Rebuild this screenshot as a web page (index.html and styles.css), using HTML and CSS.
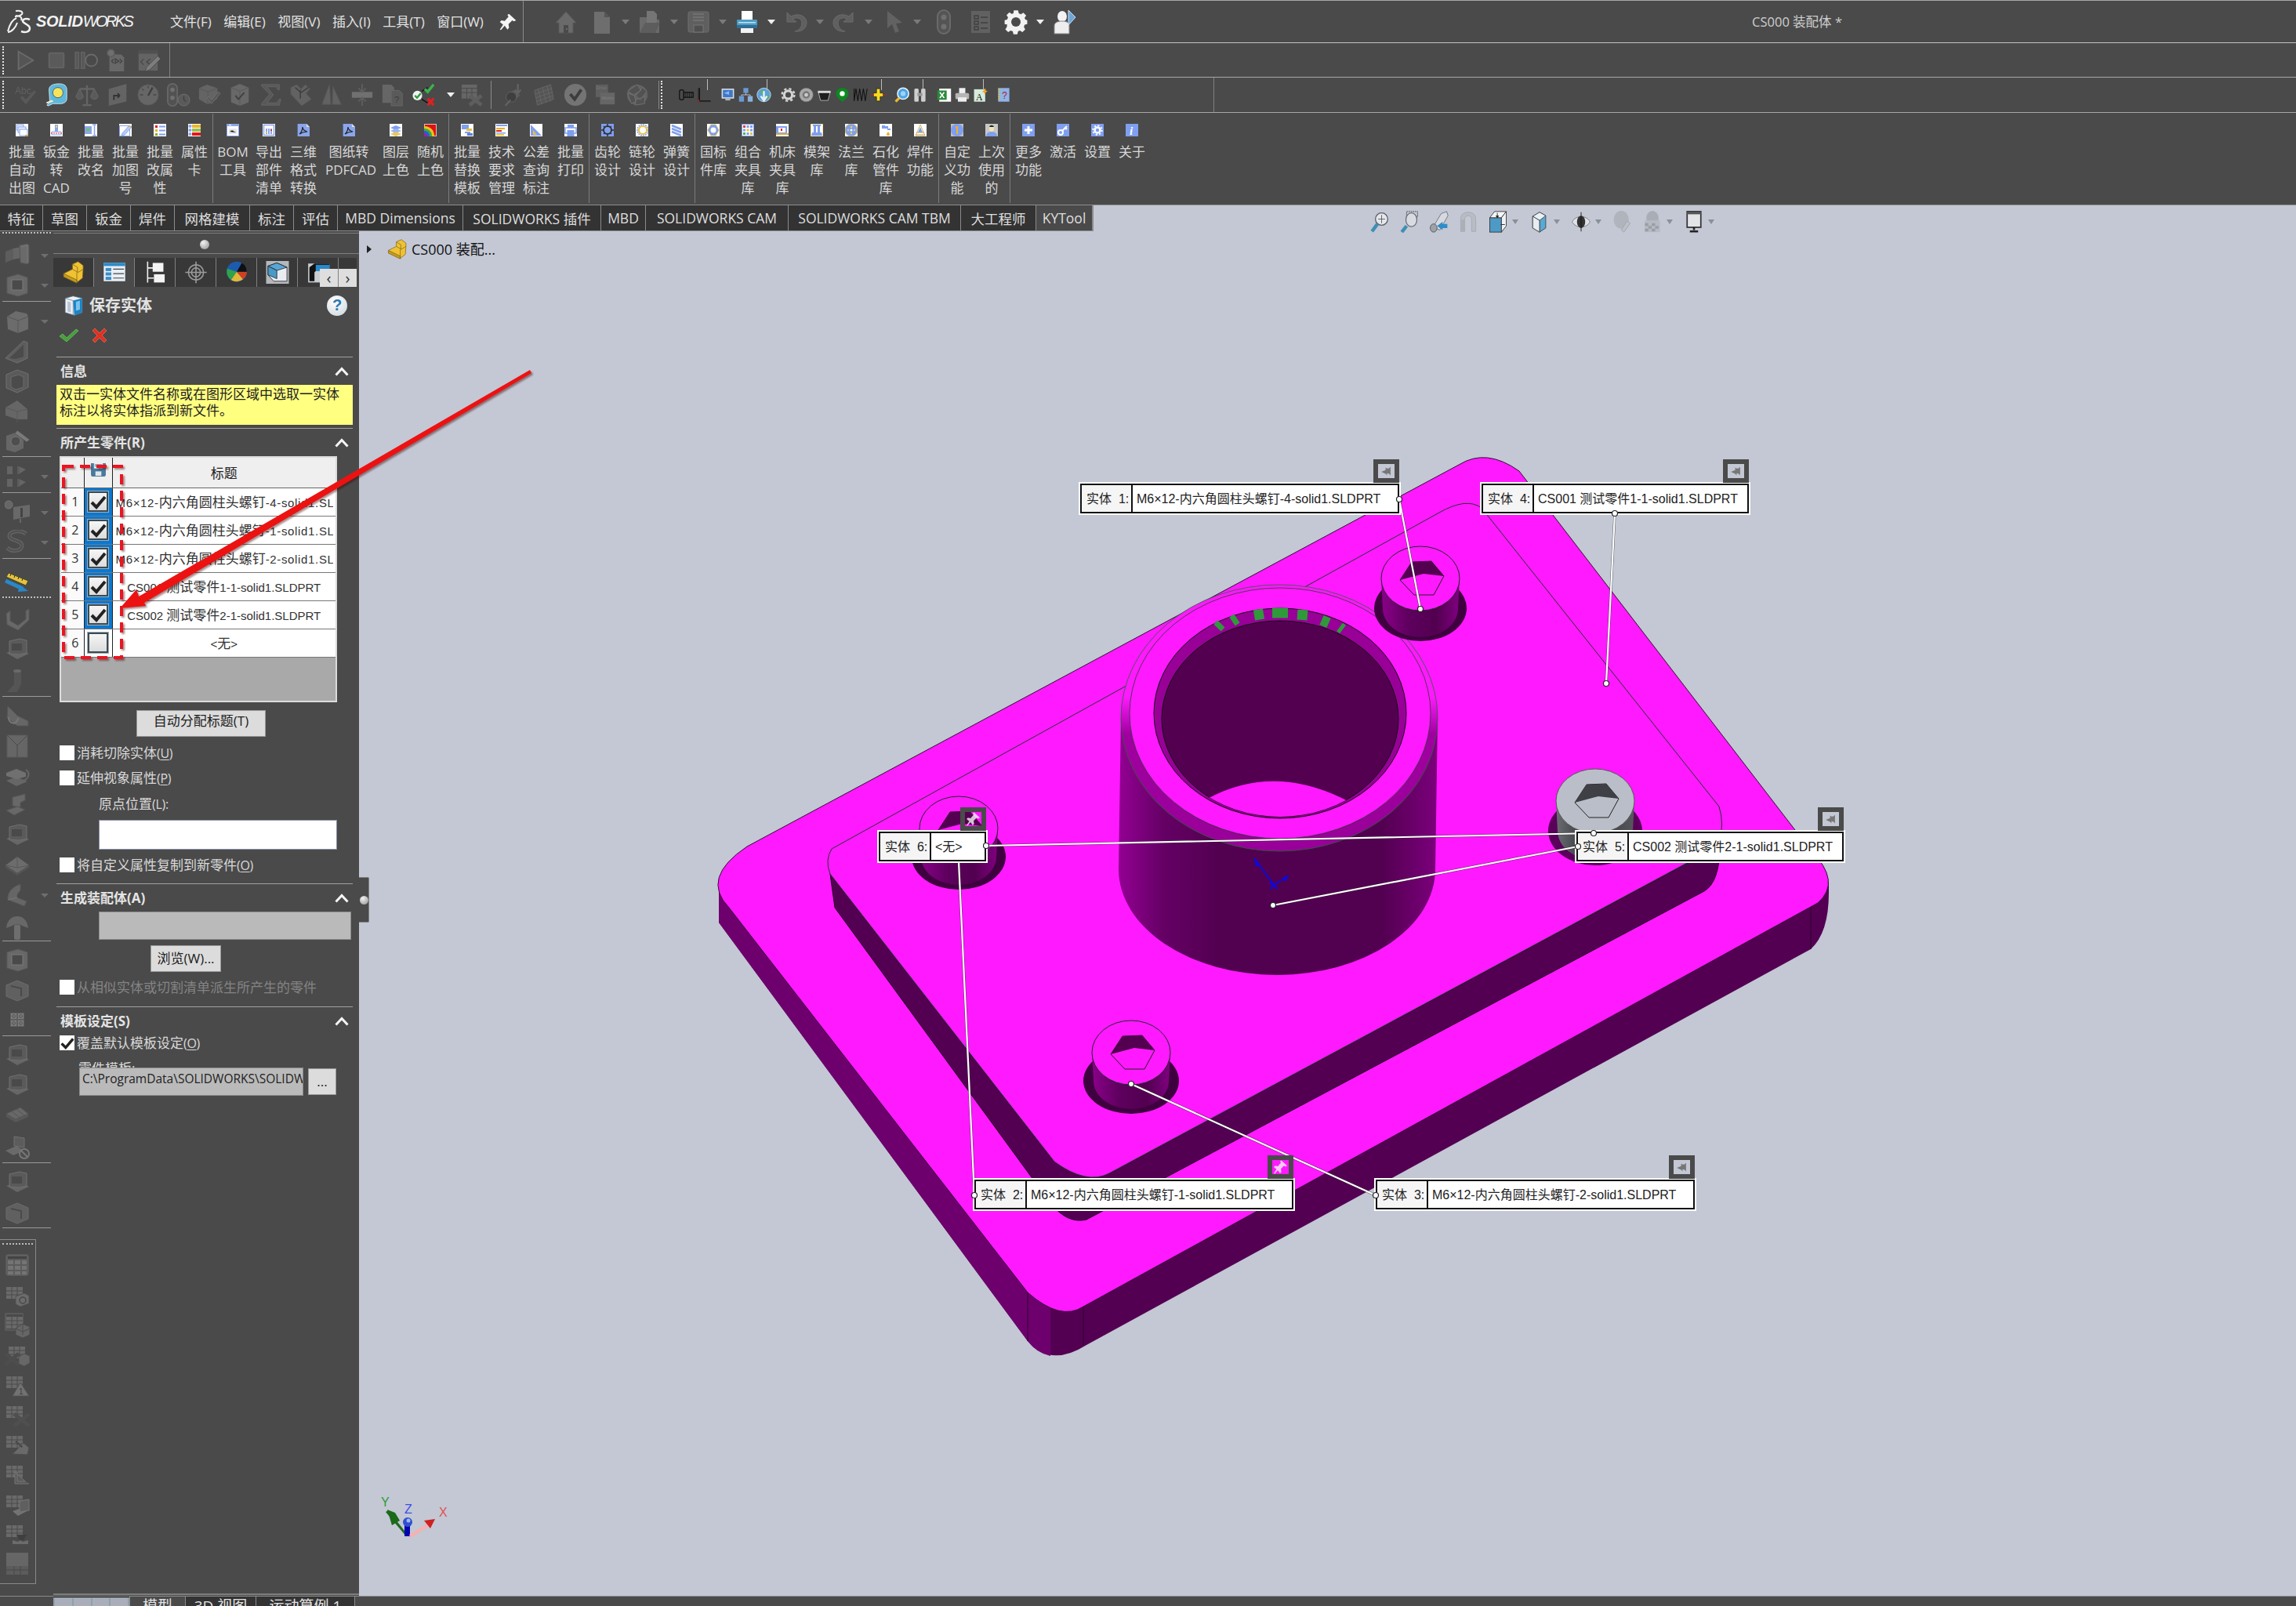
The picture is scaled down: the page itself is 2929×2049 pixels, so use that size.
FILE: index.html
```html
<!DOCTYPE html>
<html lang="zh-CN">
<head>
<meta charset="utf-8">
<title>CS000 装配体</title>
<link rel="stylesheet" href="styles.css">
</head>
<body>
<svg class="sprite" aria-hidden="true">
<defs>
<linearGradient id="bodyGrad" x1="0" x2="1" y1="0" y2="0"><stop offset="0" stop-color="#930093"/><stop offset=".14" stop-color="#650065"/><stop offset=".32" stop-color="#520050"/><stop offset=".82" stop-color="#520050"/><stop offset="1" stop-color="#7c007c"/></linearGradient>
<linearGradient id="screwGrad" x1="0" x2="1" y1="0" y2="0"><stop offset="0" stop-color="#8a008a"/><stop offset=".35" stop-color="#5e005e"/><stop offset=".7" stop-color="#520050"/><stop offset="1" stop-color="#800080"/></linearGradient>
<linearGradient id="greyScrew" x1="0" x2="1" y1="0" y2="0"><stop offset="0" stop-color="#6a6d72"/><stop offset=".4" stop-color="#303236"/><stop offset="1" stop-color="#55575c"/></linearGradient>
<linearGradient id="chamfer" x1="0" x2="0" y1="0" y2="1"><stop offset=".42" stop-color="#ff19ff"/><stop offset=".56" stop-color="#a000a0"/><stop offset="1" stop-color="#990099"/></linearGradient>
<clipPath id="holeClip"><ellipse cx="1633" cy="917" rx="151" ry="125"/></clipPath>
</defs>

<!-- title bar -->
<symbol id="q-home" viewBox="0 0 32 32"><path d="M16 3 3 17h4v13h18V17h4z" fill="#6a6a6a" stroke="#585858"/><rect x="13" y="20" width="6" height="10" fill="#4a4a4a"/><circle cx="17" cy="25" r="1" fill="#777"/></symbol>
<symbol id="q-doc" viewBox="0 0 32 32"><path d="M7 3h13l7 7v21H7z" fill="#6e6e6e"/><path d="M20 3v7h7z" fill="#555"/></symbol>
<symbol id="q-open" viewBox="0 0 32 32"><path d="M3 10h9l2 3h14v17H3z" fill="#6a6a6a"/><path d="M12 2h9l4 4v10l-9 8-4-7z" fill="#757575"/><path d="M10 17 3 30h20l6-13z" fill="#5d5d5d"/></symbol>
<symbol id="q-save" viewBox="0 0 32 32"><rect x="3" y="3" width="26" height="26" rx="2" fill="#5f5f5f" stroke="#6e6e6e"/><path d="M9 6h14M9 10h14M9 14h14" stroke="#777" stroke-width="1.5"/><rect x="10" y="20" width="12" height="9" fill="#4f4f4f" stroke="#777"/></symbol>
<symbol id="q-print" viewBox="0 0 32 32"><rect x="9" y="2" width="14" height="12" fill="#fff"/><rect x="3" y="13" width="26" height="11" rx="1" fill="#4d9cc4"/><rect x="3" y="20" width="26" height="4" fill="#2f6f96"/><rect x="8" y="24" width="16" height="6" fill="#f2f2f2"/><rect x="5" y="16" width="22" height="1.5" fill="#bfe2f2"/></symbol>
<symbol id="q-undo" viewBox="0 0 32 32"><path d="M5 4v12h12l-5-4c6-3 12 0 12 5 0 6-4 10-9 11 9 1 15-4 15-11 0-9-11-13-20-8z" fill="#5f5f5f" stroke="#6c6c6c"/></symbol>
<symbol id="q-redo" viewBox="0 0 32 32"><path d="M27 4v12H15l5-4c-6-3-12 0-12 5 0 6 4 10 9 11-9 1-15-4-15-11 0-9 11-13 20-8z" fill="#5f5f5f" stroke="#6c6c6c"/></symbol>
<symbol id="q-cursor" viewBox="0 0 32 32"><path d="M9 2v22l6-5 4 11 5-2-4-10 8-1z" fill="#626262"/></symbol>
<symbol id="q-light" viewBox="0 0 32 32"><rect x="8" y="1" width="16" height="30" rx="8" fill="#545454" stroke="#6a6a6a" stroke-width="2"/><circle cx="16" cy="10" r="3.5" fill="#6f6f6f"/><circle cx="16" cy="22" r="3.5" fill="#6f6f6f"/></symbol>
<symbol id="q-list" viewBox="0 0 32 32"><rect x="4" y="2" width="24" height="28" fill="#616161"/><path d="M8 8h5v4H8zM8 15h5v4H8zM8 22h5v4H8z" fill="none" stroke="#3f3f3f" stroke-width="1.4"/><path d="M16 10h9M16 17h9M16 24h9" stroke="#3f3f3f" stroke-width="1.6"/></symbol>
<symbol id="q-gear" viewBox="0 0 32 32"><path d="M13 1h6l1 4 3 1.400 3.500-2.300 4 4-2.300 3.600L29.500 14l2.500.7v5.600l-3.500 1-1.300 3 2 3.500-4 4-3.600-2.200-2.600 1.100-1 4h-5.500l-1-4-3-1.200-3.500 2.300-4-4 2.200-3.500L3.500 21 0 20.200v-5.500L3.500 14l1.300-3L2.700 7.600l4-4L10 5.800 12.500 5z" transform="scale(.9) translate(1.800 .5)" fill="#f2f2f2"/><circle cx="16" cy="16" r="6" fill="#4a4a4a"/></symbol>
<symbol id="q-user" viewBox="0 0 32 32"><ellipse cx="13" cy="9" rx="6" ry="7" fill="#f3f3f3"/><path d="M3 31V21c0-4 4-6 10-6s9 2 9 6v10z" fill="#eee" stroke="#888"/><path d="M21 1l9 9-9 10z" fill="#6fa6d8" stroke="#cfe4f5"/></symbol>
<symbol id="q-pin" viewBox="0 0 32 32"><path d="M18 1l13 12-4 2-3-2-7 7 1 7-3 3-5-7-7 8-2-1 6-9-6-5 3-3 6 1 7-8-2-3z" fill="#f5f5f5"/></symbol>
<symbol id="c-pin" viewBox="0 0 20 20"><path d="M16 4v12l-2-2-3-1v3L9 14 3 11l6-2.500V5l2 1.500L14 6z" fill="#777"/></symbol>

<!-- macro row -->
<symbol id="m-play" viewBox="0 0 32 32"><path d="M7 4l20 12L7 28z" fill="#555" stroke="#6a6a6a" stroke-width="2"/></symbol>
<symbol id="m-stop" viewBox="0 0 32 32"><rect x="6" y="6" width="20" height="20" rx="2" fill="#5a5a5a" stroke="#646464" stroke-width="2"/></symbol>
<symbol id="m-pause" viewBox="0 0 32 32"><rect x="1" y="5" width="5" height="22" fill="#585858" stroke="#6a6a6a"/><rect x="9" y="5" width="5" height="22" fill="#585858" stroke="#6a6a6a"/><circle cx="23" cy="16" r="8" fill="none" stroke="#6a6a6a" stroke-width="2"/></symbol>
<symbol id="m-run" viewBox="0 0 32 32"><path d="M7 8h16l4 4v19H7z" fill="#686868"/><circle cx="9" cy="6" r="5" fill="#6f6f6f" stroke="#585858" stroke-dasharray="2 1" stroke-width="2"/><path d="M13 14l-3 3 3 3M21 14l3 3-3 3M15 14l5 3-5 3z" stroke="#444" fill="none" stroke-width="1.500"/></symbol>
<symbol id="m-edit" viewBox="0 0 32 32"><rect x="3" y="2" width="26" height="28" fill="#646464"/><rect x="3" y="2" width="26" height="5" fill="#505050"/><path d="M10 14l-4 4 4 4M19 14l-5 4 5 4" stroke="#484848" fill="none" stroke-width="1.500"/><path d="M29 10l4 4-15 15-6 2 2-6z" fill="#7d7d7d" stroke="#4d4d4d"/></symbol>

<!-- grey tool row -->
<symbol id="t-tape" viewBox="0 0 32 32"><path d="M3 30l4-4-1-17C6 3 12 1 20 1s10 4 10 8v12c0 5-4 7-9 7H11l-6 3z" fill="#5fb7d9" stroke="#cde9f5"/><circle cx="18" cy="13" r="7" fill="#f6e35a" stroke="#375f7a"/><path d="M3 28l9-3-2-2-8 3z" fill="#f3ead0"/></symbol>
<symbol id="t-scale" viewBox="0 0 32 32"><path d="M16 3v26M6 8h20M10 30h12" stroke="#646464" stroke-width="2.500"/><path d="M1 18l5-10 5 10a5 4 0 01-10 0zM21 18l5-10 5 10a5 4 0 01-10 0z" fill="#5a5a5a" stroke="#6a6a6a"/></symbol>
<symbol id="t-face" viewBox="0 0 32 32"><path d="M4 8l24-7v24L4 31z" fill="#646464"/><path d="M11 23v-6h8M19 17l-3-3M19 17l-3 3" stroke="#333" fill="none" stroke-width="2"/></symbol>
<symbol id="t-gauge" viewBox="0 0 32 32"><circle cx="16" cy="16" r="14" fill="#666" stroke="#5a5a5a"/><path d="M16 17l6-11" stroke="#3f3f3f" stroke-width="2.500"/><path d="M5 16h4M8 8l2 2M16 4v3M27 16h-4" stroke="#484848" stroke-width="1.500"/></symbol>
<symbol id="t-stat" viewBox="0 0 32 32"><rect x="1" y="1" width="13" height="30" rx="6" fill="#525252" stroke="#666" stroke-width="2"/><circle cx="7.500" cy="9" r="3" fill="#707070"/><circle cx="7.500" cy="20" r="3" fill="#707070"/><circle cx="23" cy="23" r="8" fill="#5a5a5a" stroke="#707070"/><path d="M23 18v5l3 2" stroke="#333" fill="none"/></symbol>
<symbol id="t-boxc" viewBox="0 0 32 32"><path d="M2 7l11-5 14 5v14L14 29 2 22z" fill="#646464"/><path d="M14 12v17M2 7l12 5 13-5" stroke="#565656" fill="none"/><path d="M13 20l6 8 12-14-3-2-9 11-4-5z" fill="#585858" stroke="#707070"/></symbol>
<symbol id="t-box2" viewBox="0 0 32 32"><path d="M4 6l12-5 12 5v20l-12 5-12-5z" fill="#686868"/><path d="M16 11v20M4 6l12 5 12-5" stroke="#585858" fill="none"/><path d="M10 17l4 5 8-9" stroke="#3f3f3f" fill="none" stroke-width="2"/></symbol>
<symbol id="t-sum" viewBox="0 0 32 32"><path d="M4 2h24v7h-2l-2-4H11l9 11-9 11h14l3-5h2l-2 8H4v-2l11-13L4 4z" fill="#585858" stroke="#686868"/></symbol>
<symbol id="t-sect" viewBox="0 0 32 32"><path d="M2 6l8-4 6 6 6-6 6 6-5 6 7 8-13 9-15-16z" fill="#626262" stroke="#555"/><path d="M15 9v12M8 6l8 7 10-7" stroke="#3e3e3e" fill="none" stroke-width="1.500"/></symbol>
<symbol id="t-fold" viewBox="0 0 32 32"><path d="M3 29L13 2l2 27zM17 29l1-24 11 24z" fill="#626262" stroke="#575757"/></symbol>
<symbol id="t-inter" viewBox="0 0 32 32"><rect x="2" y="12" width="28" height="8" fill="#707070"/><path d="M16 1v10M11 7l5 5 5-5M16 31V21M11 25l5-5 5 5" stroke="#5e5e5e" fill="none" stroke-width="2"/></symbol>
<symbol id="t-check" viewBox="0 0 32 32"><circle cx="8" cy="17" r="6.500" fill="#f2f2f2"/><path d="M4.500 17l3 3 5-6" fill="none" stroke="#2b9e3f" stroke-width="2.500"/><path d="M14 11L22 6M14 22l8 5" stroke="#111" stroke-width="1.500"/><path d="M18 8l4 4 8-10" fill="none" stroke="#3bb24b" stroke-width="3.500"/><path d="M22 21l8 9M30 21l-8 9" stroke="#e02020" stroke-width="3.500"/></symbol>
<symbol id="t-tablex" viewBox="0 0 32 32"><rect x="2" y="2" width="21" height="19" fill="#666"/><path d="M2 7h21M2 13h21M9 7v14M16 7v14" stroke="#4a4a4a"/><path d="M13 17l16 13M29 17L13 30" stroke="#5e5e5e" stroke-width="5"/></symbol>
<symbol id="t-hole" viewBox="0 0 32 32"><path d="M8 14l10-5 7 8-9 7z" fill="#5c5c5c"/><circle cx="13" cy="19" r="7" fill="#3f3f3f" stroke="#626262"/><path d="M22 1v12M18 9l4 5 4-5M5 31l7-8" stroke="#626262" stroke-width="2.500" fill="none"/></symbol>
<symbol id="t-mesh" viewBox="0 0 32 32"><path d="M3 10l22-8 4 20-22 8z" fill="#555" stroke="#666"/><path d="M8 8l5 21M14 6l5 21M20 4l5 21M4 15l23-8M5 20l23-8M6 25l23-8" stroke="#666"/></symbol>
<symbol id="t-okc" viewBox="0 0 32 32"><circle cx="16" cy="16" r="15" fill="#747474"/><path d="M9 15l6 7 9-13" fill="none" stroke="#3d3d3d" stroke-width="4"/></symbol>
<symbol id="t-swirl" viewBox="0 0 32 32"><circle cx="16" cy="16" r="14" fill="#626262"/><path d="M3 11L16 2l5 8-10 6zM29 11l-9 12-6-6 9-11zM8 28l-5-14 9 3 2 8zM26 28l-13 2 1-7 12-5z" fill="#525252" stroke="#707070"/></symbol>
<!-- small coloured row -->
<symbol id="n-bolt" viewBox="0 0 24 24"><rect x="1" y="4" width="7" height="16" rx="3" fill="none" stroke="#111" stroke-width="1.600"/><rect x="8" y="8" width="15" height="8" fill="none" stroke="#111" stroke-width="1.600"/><path d="M11 8v8M14 8v8M17 8v8M20 8v8" stroke="#111"/></symbol>
<symbol id="n-angle" viewBox="0 0 24 24"><path d="M4 1v21h18" fill="none" stroke="#111" stroke-width="2"/><path d="M2 1v22h20" fill="none" stroke="#333"/><rect x="2" y="20" width="2" height="3" fill="#d02020"/></symbol>
<symbol id="n-mon" viewBox="0 0 24 24"><rect x="2" y="2" width="20" height="16" fill="#d8dde4"/><rect x="4" y="4" width="16" height="12" fill="#3f78c8"/><path d="M8 18h8v3H8z" fill="#aeb3ba"/><path d="M6 9l8-3v6z" fill="#8fb8ee"/></symbol>
<symbol id="n-net" viewBox="0 0 24 24"><rect x="8" y="1" width="8" height="8" fill="#6a9ad4"/><rect x="1" y="14" width="8" height="9" fill="#6a9ad4"/><rect x="15" y="14" width="8" height="9" fill="#8ab0de"/><path d="M12 9v3M5 14v-2h14v2" stroke="#dde" fill="none"/></symbol>
<symbol id="n-globe" viewBox="0 0 24 24"><circle cx="12" cy="12" r="11" fill="#5ca0d8" stroke="#d0e4f2"/><path d="M5 7l6-3 3 3-4 4zM14 14l6-2 1 5-6 3z" fill="#60b060"/><path d="M12 6v12M7 14l5 7 5-7" stroke="#e8f2ff" stroke-width="3" fill="none"/></symbol>
<symbol id="n-gear" viewBox="0 0 24 24"><circle cx="12" cy="12" r="6.500" fill="none" stroke="#d4d4d4" stroke-width="4"/><circle cx="12" cy="12" r="10" fill="none" stroke="#d4d4d4" stroke-width="3" stroke-dasharray="4 4"/></symbol>
<symbol id="n-gear2" viewBox="0 0 24 24"><circle cx="12" cy="12" r="11" fill="#a8a8a8" stroke="#777" stroke-dasharray="3 2"/><circle cx="12" cy="12" r="6" fill="#777"/><circle cx="12" cy="12" r="3" fill="#ccc"/></symbol>
<symbol id="n-belt" viewBox="0 0 24 24"><path d="M2 6h20l-4 15H6z" fill="#1f1f1f" stroke="#ccc"/><path d="M2 6h20v3H2z" fill="#e8e8e8"/></symbol>
<symbol id="n-pin" viewBox="0 0 24 24"><path d="M12 1c6 0 10 4 10 9s-6 10-10 13C8 20 2 15 2 10s4-9 10-9z" fill="#0b8a1f"/><circle cx="12" cy="10" r="4" fill="#fff"/></symbol>
<symbol id="n-spring" viewBox="0 0 24 24"><path d="M2 2v20l3-20 3 20 3-20 3 20 3-20 3 20 3-20" fill="none" stroke="#111" stroke-width="1.300"/></symbol>
<symbol id="n-cross" viewBox="0 0 24 24"><path d="M9 2h6v7h5v6h-5v7H9v-7H4V9h5z" fill="#f5dc20" stroke="#222"/><path d="M1 12h4M19 12h4" stroke="#d02020" stroke-width="2"/></symbol>
<symbol id="n-zoom" viewBox="0 0 24 24"><circle cx="14" cy="10" r="9" fill="#4aa5e8" stroke="#eaf4fb" stroke-width="2"/><circle cx="14" cy="10" r="4" fill="#9fd2f5"/><path d="M8 17l-6 6" stroke="#f0b830" stroke-width="4"/></symbol>
<symbol id="n-bino" viewBox="0 0 24 24"><rect x="3" y="2" width="7" height="21" rx="2" fill="#cfcfcf"/><rect x="14" y="2" width="7" height="21" rx="2" fill="#cfcfcf"/><rect x="8" y="9" width="8" height="5" fill="#999"/></symbol>
<symbol id="n-xl" viewBox="0 0 24 24"><rect x="4" y="2" width="19" height="21" fill="#fff"/><rect x="1" y="5" width="15" height="15" fill="#2a8a3a"/><path d="M5 8l7 9M12 8l-7 9" stroke="#fff" stroke-width="2"/></symbol>
<symbol id="n-print" viewBox="0 0 24 24"><rect x="7" y="1" width="10" height="9" fill="#f0f0f0"/><rect x="1" y="9" width="22" height="10" rx="2" fill="#b5b5b5"/><rect x="5" y="16" width="14" height="7" fill="#eee"/></symbol>

<!-- command manager -->
<symbol id="c1" viewBox="0 0 16 16"><rect width="16" height="16" fill="#fff"/><rect x="1" y="1" width="9" height="7" fill="#dfe7fa" stroke="#8aa5ea"/><rect x="3" y="4" width="10" height="7" fill="#eef2fc" stroke="#8aa5ea"/><rect x="5" y="7" width="10" height="8" fill="#fff" stroke="#8aa5ea"/><rect x="12" y="14" width="4" height="2" fill="#c8a860"/></symbol>
<symbol id="c2" viewBox="0 0 16 16"><rect width="16" height="16" fill="#fff"/><rect x="6" y="1" width="4" height="9" fill="#8aa5ea"/><rect x="7" y="2" width="2" height="3" fill="#e5cf70"/><path d="M2 10h12v4H2z" fill="none" stroke="#8aa5ea"/><path d="M1 12h14" stroke="#e03a3a" stroke-dasharray="2 1"/></symbol>
<symbol id="c3" viewBox="0 0 16 16"><rect width="16" height="16" fill="#fff"/><rect y="3" width="9" height="10" fill="#8aa5ea"/><rect x="2" y="6" width="5" height="3" fill="#6ec06e"/><path d="M10 1h5M10 15h5M12.500 1v14" stroke="#8aa5ea" stroke-width="1.500"/></symbol>
<symbol id="c4" viewBox="0 0 16 16"><rect width="16" height="16" fill="#fff"/><rect x=".5" y="2.500" width="13" height="13" fill="none" stroke="#8aa5ea"/><path d="M4 12L13 2l3 2-9 10-4 1z" fill="#b8cdf5" stroke="#8aa5ea"/><path d="M13 2l3 2-1 1-3-2z" fill="#e5b040"/></symbol>
<symbol id="c5" viewBox="0 0 16 16"><rect width="16" height="16" fill="#fff"/><rect x="2" y="2" width="3" height="3" fill="#e01818"/><rect x="2" y="7" width="3" height="3" fill="#f0b020"/><rect x="2" y="12" width="3" height="3" fill="#80b030"/><path d="M7 3.500h8M7 8.500h8M7 13.500h8" stroke="#7f9ff0" stroke-width="2"/></symbol>
<symbol id="c6" viewBox="0 0 16 16"><rect width="16" height="16" fill="#fff"/><circle cx="2.500" cy="3" r="2" fill="#8aa5ea"/><circle cx="2.500" cy="8" r="2" fill="#8aa5ea"/><circle cx="2.500" cy="13" r="2" fill="#8aa5ea"/><rect x="5" y="1" width="11" height="4" fill="#e8b830"/><rect x="5" y="6" width="11" height="4" fill="#9cc050"/><rect x="5" y="11" width="11" height="4" fill="#e01818"/></symbol>
<symbol id="c7" viewBox="0 0 16 16"><rect width="16" height="16" fill="#8aa5ea"/><rect x="1" y="3" width="14" height="12" fill="#fff"/><rect x="3" y="6" width="10" height="7" fill="#dfe7fa"/><path d="M4 10l3-2 5 3" stroke="#c8a860"/><rect x="3" y="1" width="3" height="1" fill="#fff"/></symbol>
<symbol id="c8" viewBox="0 0 16 16"><rect width="16" height="16" fill="#fff"/><rect x="1.500" y="1.500" width="13" height="13" fill="none" stroke="#8aa5ea" stroke-width="1.500"/><path d="M5 6v7M8 6v7M11 6v7" stroke="#8aa5ea" stroke-width="2"/><path d="M11 7v2" stroke="#e03030" stroke-width="2"/><path d="M5 10v2" stroke="#e8c040" stroke-width="2"/></symbol>
<symbol id="c9" viewBox="0 0 16 16"><path d="M0 0h12l4 4v12H0z" fill="#8aa5ea"/><path d="M12 0v4h4z" fill="#ddd"/><path d="M3 13c3-2 4-7 4-9 0 3 2 5 6 6-4 0-7 1-10 3z" fill="none" stroke="#222" stroke-width="1.200"/><path d="M0 0v16" stroke="#333"/></symbol>
<symbol id="c10" viewBox="0 0 16 16"><rect width="16" height="16" fill="#fff"/><path d="M8 2l7 3-7 3-7-3z" fill="#7f9ff0"/><path d="M8 6l7 3-7 3-7-3z" fill="#9ab4f2"/><path d="M8 10l7 3-7 3-7-3z" fill="#e8c860"/></symbol>
<symbol id="c11" viewBox="0 0 16 16"><rect width="16" height="16" fill="#c8c8c8"/><rect x="1" y="1" width="14" height="14" fill="#e01010"/><circle cx="1" cy="15" r="12" fill="#f0c020"/><circle cx="1" cy="15" r="9" fill="#40a840"/><circle cx="1" cy="15" r="6" fill="#2060e0"/><circle cx="1" cy="15" r="3" fill="#a020a0"/></symbol>
<symbol id="c12" viewBox="0 0 16 16"><rect width="16" height="16" fill="#fff"/><rect x="1" y="1" width="9" height="6" fill="#7f9ff0"/><rect x="7" y="6" width="7" height="3" fill="#e8c040"/><rect x="5" y="10" width="7" height="2" fill="#7f9ff0"/><rect x="8" y="12" width="7" height="3" fill="#5f7fd8"/></symbol>
<symbol id="c13" viewBox="0 0 16 16"><rect width="16" height="16" fill="#fff"/><rect x="1" y="1" width="14" height="2" fill="#7f9ff0"/><rect x="1" y="5" width="11" height="2" fill="#f0b020"/><rect x="1" y="8" width="7" height="2" fill="#e02020"/><rect x="1" y="11" width="12" height="1.500" fill="#7f9ff0"/><rect x="1" y="13" width="10" height="2" fill="#f0c840"/></symbol>
<symbol id="c14" viewBox="0 0 16 16"><rect width="16" height="16" fill="#fff"/><path d="M1 1l14 14H1z" fill="#7f9ff0"/><path d="M4 8l5 6H4z" fill="#f0c030"/></symbol>
<symbol id="c15" viewBox="0 0 16 16"><rect width="16" height="16" fill="#fff"/><rect x="4" y="1" width="8" height="4" fill="#7f9ff0"/><rect x="1" y="5" width="14" height="7" fill="none" stroke="#7f9ff0" stroke-width="1.500"/><rect x="3.500" y="8" width="9" height="8" fill="#7f9ff0"/></symbol>
<symbol id="c16" viewBox="0 0 16 16"><rect width="16" height="16" fill="#7f9ff0"/><circle cx="8" cy="8" r="5" fill="none" stroke="#333" stroke-width="2"/><path d="M3 3l2 2M13 3l-2 2M3 13l2-2M13 13l-2-2M8 0v3M8 13v3M0 8h3M13 8h3" stroke="#333" stroke-width="1.500"/></symbol>
<symbol id="c17" viewBox="0 0 16 16"><rect width="16" height="16" fill="#fff"/><circle cx="9" cy="8" r="5" fill="none" stroke="#e8c040" stroke-width="2"/><circle cx="9" cy="8" r="7" fill="none" stroke="#7f9ff0" stroke-width="1.500" stroke-dasharray="2 1"/></symbol>
<symbol id="c18" viewBox="0 0 16 16"><rect width="16" height="16" fill="#fff"/><path d="M2 2l12 5M2 6l12 5M2 10l12 5" stroke="#7f9ff0" stroke-width="2.500"/></symbol>
<symbol id="c19" viewBox="0 0 16 16"><rect width="16" height="16" fill="#fff"/><path d="M5 1h6l4 7-4 7H5L1 8z" fill="#7f9ff0" stroke="#d8b860"/><circle cx="8" cy="8" r="3.500" fill="#fff"/></symbol>
<symbol id="c20" viewBox="0 0 16 16"><rect width="16" height="16" fill="#7f9ff0"/><rect x="1" y="1" width="14" height="14" fill="#fff"/><rect x="2" y="2" width="3" height="3" fill="#e04040"/><rect x="6.500" y="2" width="3" height="3" fill="#7f9ff0"/><rect x="11" y="2" width="3" height="3" fill="#7f9ff0"/><rect x="2" y="6.500" width="3" height="3" fill="#7f9ff0"/><rect x="6.500" y="6.500" width="3" height="3" fill="#e8c040"/><rect x="11" y="6.500" width="3" height="3" fill="#7f9ff0"/><rect x="2" y="11" width="3" height="3" fill="#50b050"/><rect x="6.500" y="11" width="3" height="3" fill="#7f9ff0"/><rect x="11" y="11" width="3" height="3" fill="#e8c040"/></symbol>
<symbol id="c21" viewBox="0 0 16 16"><rect width="16" height="16" fill="#fff"/><rect y="3" width="14" height="10" fill="#7f9ff0"/><rect x="3" y="5" width="9" height="6" fill="#fff"/><rect x="6" y="6" width="2" height="3" fill="#e02020"/><rect x="0" y="12" width="16" height="2" fill="#d8b040"/></symbol>
<symbol id="c22" viewBox="0 0 16 16"><rect width="16" height="16" fill="#fff" stroke="#e8d060"/><rect x="3" y="1" width="10" height="2" fill="#7f9ff0"/><rect x="4" y="3" width="3" height="8" fill="#7f9ff0"/><rect x="9" y="3" width="3" height="8" fill="#7f9ff0"/><path d="M2 11h12l1 4H1z" fill="#7f9ff0"/></symbol>
<symbol id="c23" viewBox="0 0 16 16"><rect width="16" height="16" fill="#fff"/><circle cx="8" cy="8" r="8" fill="#7f9ff0"/><circle cx="8" cy="8" r="8" fill="none" stroke="#d8c060"/><g fill="#e8d060"><circle cx="8" cy="4" r="1.200"/><circle cx="8" cy="12" r="1.200"/><circle cx="4" cy="8" r="1.200"/><circle cx="12" cy="8" r="1.200"/></g><circle cx="8" cy="8" r="1.500" fill="#fff"/></symbol>
<symbol id="c24" viewBox="0 0 16 16"><rect width="16" height="16" fill="#fff"/><path d="M3 3h8v3h3v2h-4V6H3z" fill="#7f9ff0"/><rect x="3" y="2" width="4" height="1" fill="#7f9ff0"/><path d="M11 10l2 3a2 2 0 1 1-4 0z" fill="#f0a820"/></symbol>
<symbol id="c25" viewBox="0 0 16 16"><rect width="16" height="16" fill="#fff"/><path d="M8 1l6 14H2z" fill="none" stroke="#d8b860"/><path d="M8 4l3 7H5z" fill="#7f9ff0"/><path d="M3 11h10M2 14h12" stroke="#c0a060"/></symbol>
<symbol id="c26" viewBox="0 0 16 16"><rect width="16" height="16" fill="#c0c0c0"/><circle cx="8" cy="8" r="8" fill="#7f9ff0"/><rect x="7" y="3" width="2" height="10" fill="#f0b030"/><path d="M5.500 5L7 3v2z" fill="#f0b030"/></symbol>
<symbol id="c27" viewBox="0 0 16 16"><rect width="16" height="16" fill="#c8c8c8"/><path d="M1 16c0-4 3-6 7-6s7 2 7 6z" fill="#7f9ff0"/><ellipse cx="8" cy="6" rx="3" ry="4" fill="#f5e6b0"/><path d="M5 4c1-3 5-3 6 0z" fill="#222"/></symbol>
<symbol id="c28" viewBox="0 0 16 16"><rect width="16" height="16" fill="#7f9ff0"/><path d="M3 8h10M8 3v10" stroke="#fff" stroke-width="3"/></symbol>
<symbol id="c29" viewBox="0 0 16 16"><rect width="16" height="16" fill="#7f9ff0"/><circle cx="5" cy="11" r="3" fill="none" stroke="#fff" stroke-width="2"/><path d="M7 9l6-6M11 5l2 2" stroke="#fff" stroke-width="2"/></symbol>
<symbol id="c30" viewBox="0 0 16 16"><rect width="16" height="16" fill="#7f9ff0"/><circle cx="8" cy="8" r="3.500" fill="none" stroke="#fff" stroke-width="2.500"/><circle cx="8" cy="8" r="5.800" fill="none" stroke="#fff" stroke-width="1.800" stroke-dasharray="2.200 2.300"/></symbol>

<!-- left strip -->
<symbol id="s-ext" viewBox="0 0 32 32"><path d="M1 11l10-4v14L1 25z" fill="#5d5d5d"/><path d="M11 7l10-2v14l-10 2z" fill="#666"/><path d="M19 3l10-2 2 2v22l-2 2-9-2z" fill="#6a6a6a" stroke="#565656"/><path d="M21 5l8-2v22" stroke="#777" fill="none"/></symbol>
<symbol id="s-frame" viewBox="0 0 32 32"><path d="M3 6l14-4 12 4v20l-12 4-14-4z" fill="#686868" stroke="#5a5a5a"/><rect x="9" y="9" width="14" height="13" fill="#4a4a4a" stroke="#7a7a7a"/></symbol>
<symbol id="s-cham" viewBox="0 0 32 32"><path d="M3 10l11-7 14 3 2 4v16L17 31 4 26z" fill="#6c6c6c"/><path d="M4 10l13 5 13-5M17 15v16" stroke="#565656" fill="none"/></symbol>
<symbol id="s-rib" viewBox="0 0 32 32"><path d="M1 25L24 3l5 2v20l-13 6z" fill="#5d5d5d" stroke="#707070"/><path d="M6 25L24 8v15l-10 3z" fill="#4b4b4b"/></symbol>
<symbol id="s-box" viewBox="0 0 32 32"><path d="M2 8l14-6 14 5v17l-14 7-14-6z" fill="#5a5a5a" stroke="#707070"/><path d="M8 11l10-3 6 3v13l-10 3-6-3z" fill="#4b4b4b" stroke="#6a6a6a"/></symbol>
<symbol id="s-wedge" viewBox="0 0 32 32"><path d="M1 12L16 3l13 11v13H16L1 22z" fill="#666"/><path d="M16 17v14M1 12l15 5 13-3" stroke="#595959" fill="none"/></symbol>
<symbol id="s-cam" viewBox="0 0 32 32"><path d="M2 10l14-5 8 3v18l-11 5-11-3z" fill="#666"/><circle cx="14" cy="17" r="6" fill="#4e4e4e" stroke="#777"/><path d="M16 3l16 12-4 3L13 7z" fill="#7a7a7a" stroke="#4c4c4c" stroke-dasharray="2 1"/></symbol>
<symbol id="s-grid" viewBox="0 0 32 32"><rect x="3" y="3" width="7" height="10" fill="#646464"/><path d="M18 3l9 4-9 6z" fill="#666"/><rect x="3" y="19" width="7" height="10" fill="#646464"/><path d="M18 19l9 4-9 6z" fill="#666"/><rect x="16" y="3" width="3" height="10" fill="#5c5c5c"/><rect x="16" y="19" width="3" height="10" fill="#5c5c5c"/></symbol>
<symbol id="s-ref" viewBox="0 0 32 32"><circle cx="5" cy="6" r="5" fill="#666" stroke="#777"/><path d="M11 9l21-3v15l-21 4z" fill="#696969"/><rect x="20" y="10" width="3" height="12" fill="#444"/><path d="M20 24v5" stroke="#666" stroke-width="2"/></symbol>
<symbol id="s-curve" viewBox="0 0 32 32"><path d="M27 5C20-1 6 2 6 8c0 6 16 5 16 12s-12 9-19 3" fill="none" stroke="#636363" stroke-width="5"/><path d="M27 5C20-1 6 2 6 8c0 6 16 5 16 12s-12 9-19 3" fill="none" stroke="#505050" stroke-width="2"/></symbol>
<symbol id="s-ruler" viewBox="0 0 32 32"><path d="M5 7l25 10-3 6L2 12z" fill="#e5c340" stroke="#4a4a20"/><path d="M8 8l-1 3M13 10l-1 3M18 12l-1 3M23 14l-1 3" stroke="#333"/><path d="M1 17l22 10" stroke="#2a88c8" stroke-width="5"/><path d="M19 22l11 8-13 1z" fill="#2a88c8"/></symbol>
<symbol id="s-u" viewBox="0 0 32 32"><path d="M2 8l5-4v13l10 6 10-8V4l4-2v14L17 29 3 22z" fill="#686868" stroke="#565656"/></symbol>
<symbol id="s-sheet" viewBox="0 0 32 32"><path d="M2 20l16-6 13 7-15 7z" fill="#666"/><path d="M6 5l13-3 9 2v16l-9 2-13-1z" fill="#5a5a5a" stroke="#707070"/><rect x="9" y="8" width="13" height="9" fill="#4a4a4a"/></symbol>
<symbol id="s-base" viewBox="0 0 32 32"><path d="M12 2h9v18l8 10H3l9-10z" fill="#555"/><ellipse cx="16" cy="3" rx="5" ry="2" fill="#6a6a6a"/><path d="M21 20l8 10H16z" fill="#4a4a4a"/></symbol>
<symbol id="s-flat" viewBox="0 0 32 32"><path d="M2 14l18-8 10 8-16 7z" fill="#686868" stroke="#565656"/><path d="M2 14v4l12 7 16-7v-4l-16 7z" fill="#585858"/><path d="M9 11l11 9M15 8l11 9" stroke="#555"/></symbol>
<symbol id="s-fold" viewBox="0 0 32 32"><path d="M4 3l12 12 14 7v6H16L3 18z" fill="#666" stroke="#575757"/><path d="M5 17c0 10 12 10 12 1" fill="none" stroke="#777" stroke-width="2"/></symbol>
<symbol id="s-square" viewBox="0 0 32 32"><rect x="3" y="2" width="26" height="28" fill="#666" stroke="#5a5a5a"/><path d="M3 2l13 13 13-13M16 15v15" stroke="#4a4a4a" fill="none"/></symbol>
<symbol id="s-steps" viewBox="0 0 32 32"><path d="M2 22l13-5 14 6-14 6z" fill="#666"/><path d="M2 12l13-5 12 5v5l-12 3-13-4z" fill="#707070"/><path d="M27 8c6 4 4 12-4 14" fill="none" stroke="#666" stroke-width="2"/></symbol>
<symbol id="s-bend" viewBox="0 0 32 32"><path d="M2 22l14-5 10 4-14 7zM10 13V5l16-4v8l-6 3v6l-10-2z" fill="#686868" stroke="#565656"/></symbol>
<symbol id="s-pyr" viewBox="0 0 32 32"><path d="M1 16L16 5l15 11-15 10z" fill="#6c6c6c"/><path d="M1 16l15 3 15-3M16 5v14" stroke="#585858" fill="none"/><path d="M1 16v3l15 10 15-10v-3l-15 10z" fill="#555"/></symbol>
<symbol id="s-arc" viewBox="0 0 32 32"><path d="M20 2C8 6 3 14 4 22l21 8 3-6-12-5c-1-3 2-7 4-9z" fill="#666" stroke="#565656"/><path d="M4 22l12-3" stroke="#777"/></symbol>
<symbol id="s-mush" viewBox="0 0 32 32"><path d="M2 16C3 5 10 1 16 1s13 4 14 15l-8-3c-3-2-9-2-12 0z" fill="#686868"/><rect x="12" y="12" width="8" height="19" rx="2" fill="#6e6e6e"/></symbol>
<symbol id="s-bolts" viewBox="0 0 32 32"><rect x="4" y="4" width="24" height="24" fill="#5e5e5e"/><g fill="none" stroke="#878787"><rect x="6" y="6" width="8" height="8"/><rect x="18" y="6" width="8" height="8"/><rect x="6" y="18" width="8" height="8"/><rect x="18" y="18" width="8" height="8"/><path d="M6 6l8 8M14 6l-8 8M18 6l8 8M26 6l-8 8M6 18l8 8M14 18l-8 8M18 18l8 8M26 18l-8 8"/></g></symbol>
<symbol id="s-nobend" viewBox="0 0 32 32"><path d="M1 21l14-6 10 6-14 6z" fill="#6a6a6a"/><path d="M12 3l13 2v12l-13-2z" fill="#5c5c5c" stroke="#707070"/><circle cx="25" cy="25" r="6" fill="#4c4c4c" stroke="#777" stroke-width="2"/><path d="M21 21l8 8" stroke="#777" stroke-width="2"/></symbol>
<symbol id="s-tray" viewBox="0 0 32 32"><path d="M2 10l14-6 14 6v14l-14 6-14-6z" fill="#606060" stroke="#6c6c6c"/><path d="M8 11l13 3v10" fill="none" stroke="#4a4a4a" stroke-width="2"/></symbol>
<symbol id="tb1" viewBox="0 0 32 32"><rect x="2" y="2" width="28" height="26" rx="2" fill="#5c5c5c" stroke="#686868"/><rect x="4" y="4" width="24" height="3" fill="#444"/><g fill="#747474"><rect x="4" y="9" width="7" height="5"/><rect x="13" y="9" width="7" height="5"/><rect x="22" y="9" width="6" height="5"/><rect x="4" y="16" width="7" height="5"/><rect x="13" y="16" width="7" height="5"/><rect x="22" y="16" width="6" height="5"/><rect x="4" y="23" width="7" height="4"/><rect x="13" y="23" width="7" height="4"/><rect x="22" y="23" width="6" height="4"/></g></symbol>
<symbol id="tb-grid" viewBox="0 0 32 32"><rect x="2" y="2" width="21" height="18" fill="#6a6a6a"/><rect x="2" y="2" width="21" height="3" fill="#4a4a4a"/><path d="M2 10h21M2 15h21M9 5v15M16 5v15" stroke="#4a4a4a"/></symbol>
<symbol id="tb2" viewBox="0 0 32 32"><use href="#tb-grid"/><path d="M14 17l11-4 6 3v10l-11 4-6-3z" fill="#6c6c6c" stroke="#505050"/><circle cx="23" cy="22" r="4" fill="none" stroke="#484848" stroke-width="1.500"/></symbol>
<symbol id="tb3" viewBox="0 0 32 32"><rect x="1" y="1" width="22" height="21" fill="none" stroke="#6a6a6a"/><use href="#tb-grid"/><path d="M14 20l9-6 9 4v10l-9 4-9-4z" fill="#666" stroke="#4c4c4c"/><path d="M23 14v14M14 20l9 4 9-4" stroke="#4c4c4c" fill="none"/></symbol>
<symbol id="tb4" viewBox="0 0 32 32"><use href="#tb-grid" x="3"/><path d="M1 28L18 14M1 14l17 14" stroke="#4d4d4d" stroke-width="5"/><path d="M18 18l7-4 7 3v9l-7 4-7-3z" fill="#676767" stroke="#505050"/></symbol>
<symbol id="tb6" viewBox="0 0 32 32"><use href="#tb-grid"/><path d="M12 15l19 15M31 15L12 30" stroke="#4f4f4f" stroke-width="5"/></symbol>
<symbol id="tb7" viewBox="0 0 32 32"><use href="#tb-grid"/><path d="M10 28l14-14 7 6-2 9z" fill="#6a6a6a" stroke="#4e4e4e"/><path d="M14 12l9 8" stroke="#3e3e3e" stroke-dasharray="2 1" stroke-width="2"/></symbol>
<symbol id="tb8" viewBox="0 0 32 32"><use href="#tb-grid"/><path d="M13 13v15h18M13 13h3v12l10 0z" fill="#5a5a5a" stroke="#777"/></symbol>
<symbol id="tb9" viewBox="0 0 32 32"><use href="#tb-grid"/><path d="M10 25l14-5 8 3-15 8z" fill="#737373"/><path d="M19 12l12-2v14l-12 2z" fill="#5f5f5f" stroke="#777"/></symbol>
<symbol id="tb10" viewBox="0 0 32 32"><use href="#tb-grid"/><path d="M15 17h13l-4 7h-5z" fill="#3f3f3f"/><path d="M10 24l7 2 3-2 3 2 7-2v5H10z" fill="#6c6c6c"/></symbol>
<symbol id="tb11" viewBox="0 0 32 32"><rect x="2" y="2" width="28" height="28" fill="#666"/><rect x="2" y="19" width="28" height="11" fill="#5c5c5c"/><path d="M2 24h28M12 19v11M20 19v11" stroke="#484848"/></symbol>

<!-- panel -->
<symbol id="p-asm" viewBox="0 0 36 36"><path d="M2 20l14-7V5l9-4 8 6v6l-1 14-9 7z" fill="#f0c232" stroke="#7d6520"/><path d="M2 20l21 10 0 5-21-10z" fill="#c69b1e" stroke="#7d6520"/><path d="M16 13l9 5 8-5M23 18v16" stroke="#7d6520" fill="none"/><path d="M16 5l8 5v8" stroke="#7d6520" fill="none"/></symbol>
<symbol id="p-list" viewBox="0 0 36 36"><rect x="1" y="3" width="34" height="29" fill="#e8eef5"/><rect x="1" y="3" width="34" height="5" fill="#2a8bc9"/><rect x="4" y="11" width="9" height="5" fill="#3a8dc4"/><rect x="4" y="18" width="9" height="5" fill="#3a8dc4"/><rect x="4" y="25" width="9" height="5" fill="#3a8dc4"/><path d="M16 13h17M16 20h17M16 27h17" stroke="#444" stroke-width="1.500"/></symbol>
<symbol id="p-tree" viewBox="0 0 36 36"><path d="M6 1v33M6 11h10M6 27h10" stroke="#eee" stroke-width="2"/><rect x="14" y="3" width="17" height="14" fill="#f4f4f4"/><rect x="16" y="21" width="17" height="13" fill="#f4f4f4"/></symbol>
<symbol id="p-cross" viewBox="0 0 36 36"><circle cx="18" cy="18" r="12" fill="none" stroke="#9a9a9a" stroke-width="2"/><circle cx="18" cy="18" r="7" fill="none" stroke="#9a9a9a" stroke-width="2"/><path d="M1 18h34M18 1v34" stroke="#9a9a9a" stroke-width="2"/></symbol>
<symbol id="p-ball" viewBox="0 0 36 36"><circle cx="18" cy="17" r="16" fill="#1c5bb0"/><path d="M18 17L3 12a16 16 0 0 0 6 18z" fill="#2fa24a"/><path d="M18 17L9 30a16 16 0 0 0 19-1z" fill="#e0b83a"/><path d="M18 17l10 12A16 16 0 0 0 34 17z" fill="#d04020"/><path d="M18 17l16 0A16 16 0 0 0 26 3z" fill="#101010"/></symbol>
<symbol id="p-cube" viewBox="0 0 36 36"><rect x="0" y="0" width="36" height="36" fill="#b4b8bd"/><path d="M3 8l14-5 16 7v22H12L3 22z" fill="#e9edf2" stroke="#222"/><path d="M3 8l14 7 16-5-16-7z" fill="#58a6d6" stroke="#222"/><path d="M3 8l14 7v13L3 22z" fill="#4a9ac8" stroke="#222"/></symbol>
<symbol id="p-part" viewBox="0 0 36 36"><rect x="2" y="4" width="34" height="30" fill="#c8ccd1"/><path d="M4 32V10l8-6h24v10H16l-4 4v14z" fill="#111"/><rect x="14" y="6" width="22" height="10" fill="#2a88c8"/></symbol>
<symbol id="p-save" viewBox="0 0 36 36"><path d="M3 5l14-4 16 4v25l-14 5-16-5z" fill="#ecf2f8" stroke="#5e7180"/><path d="M17 9l16-4v25l-14 5z" fill="#1b83c5"/><path d="M22 11l7-2v16l-7 2z" fill="#7cc3ec"/><path d="M3 5l14 4v26" fill="none" stroke="#5e7180"/><path d="M7 10l6 2v18l-6-2z" fill="#bac6d2"/></symbol>
<symbol id="p-floppy" viewBox="0 0 20 18"><path d="M0 0h20v15a3 3 0 0 1-3 3H3a3 3 0 0 1-3-3z" fill="#4a7a9c"/><rect x="4" y="0" width="12" height="7" fill="#eaf1f6"/><path d="M5 2h10M5 4h10" stroke="#4a7a9c"/><rect x="6" y="11" width="8" height="6" fill="#dfe8ef"/></symbol>
<symbol id="chev" viewBox="0 0 18 12"><path d="M1.500 10.500 9 2.500l7.500 8" fill="none" stroke="#f5f5f5" stroke-width="3"/></symbol>
<symbol id="tick" viewBox="0 0 22 22"><path d="M3 12l6 6L20 5" fill="none" stroke="#222" stroke-width="4"/></symbol>

<!-- view toolbar -->
<symbol id="v-zoom" viewBox="0 0 28 32"><circle cx="18" cy="12" r="9" fill="#e4e7ec" stroke="#5b6068" stroke-width="1.500"/><path d="M18 6v12M13 12h10" stroke="#555"/><path d="M12 19 4 30" stroke="#3f8eb5" stroke-width="5"/></symbol>
<symbol id="v-zoomb" viewBox="0 0 28 32"><rect x="11" y="1" width="16" height="8" fill="none" stroke="#444" stroke-dasharray="2 1"/><ellipse cx="18" cy="13" rx="8" ry="10" fill="#d8dbe2" stroke="#6a6f78" stroke-width="1.500"/><path d="M11 22 4 31" stroke="#3f8eb5" stroke-width="5"/></symbol>
<symbol id="v-prev" viewBox="0 0 28 32"><path d="M6 24 18 4l8-3 2 6-12 21z" fill="#d6d9df" stroke="#6a6f78"/><ellipse cx="7" cy="25" rx="5" ry="6" fill="#9ca2aa" stroke="#555"/><path d="M12 22l8-6v3h7v6h-7v3z" fill="#2f8dc8"/></symbol>
<symbol id="v-sect" viewBox="0 0 28 32"><path d="M3 30V12C3 5 8 2 14 2s11 3 11 10v18h-6V12c0-3-2-5-5-5s-5 2-5 5v18z" fill="#b8bcc4" stroke="#a4a8b0"/><path d="M3 14l6-2v18H3z" fill="#acafb7"/></symbol>
<symbol id="v-view" viewBox="0 0 28 32"><rect x="2" y="10" width="17" height="21" fill="#4d9ac6" stroke="#333"/><path d="M2 10l7-9h17l-7 9z" fill="#f5f6f8" stroke="#333"/><path d="M19 10l7-9v21l-7 9z" fill="#f0f1f4" stroke="#333"/><path d="M13 3v6M11 7l2 3 2-3M18 20h6" stroke="#222"/></symbol>
<symbol id="v-disp" viewBox="0 0 28 32"><path d="M4 8l10-6 9 5v18l-9 6-10-6z" fill="#5aa8d4" stroke="#444"/><path d="M4 8l10 6 9-7-9-5z" fill="#e8f1f6" stroke="#444"/><path d="M14 14v17" stroke="#444"/><path d="M14 14v17L4 25V8z" fill="#e7edf2" stroke="#444"/></symbol>
<symbol id="v-eye" viewBox="0 0 28 32"><path d="M1 16C6 6 22 6 27 16 22 26 6 26 1 16z" fill="#dfe2e6" stroke="#777"/><ellipse cx="14" cy="16" rx="6" ry="9" fill="#333"/><path d="M14 2v28" stroke="#111"/></symbol>
<symbol id="v-apar" viewBox="0 0 28 32"><ellipse cx="12" cy="13" rx="11" ry="13" fill="#b0b4bc"/><path d="M16 31l9-13-5-3-8 13z" fill="#bcc0c8" stroke="#a0a4ac"/></symbol>
<symbol id="v-scene" viewBox="0 0 28 32"><ellipse cx="14" cy="11" rx="9" ry="11" fill="#a9adb6"/><rect x="3" y="14" width="22" height="17" fill="#b6bac2"/><path d="M3 18h5v4H3zm10 0h5v4h-5zM8 22h5v4H8zm10 0h5v4h-5zM3 26h5v4H3zm10 0h5v4h-5z" fill="#9a9ea6"/></symbol>
<symbol id="v-mon" viewBox="0 0 28 32"><rect x="4" y="1" width="20" height="23" fill="#e2e4e8" stroke="#333" stroke-width="2"/><rect x="4" y="1" width="20" height="4" fill="#555"/><path d="M14 24v4M8 30h12" stroke="#222" stroke-width="3"/></symbol>
</svg>

<div class="app">
  <header class="titlebar">
    <div class="brand">
      <svg class="ds-logo" viewBox="0 0 34 32"><path d="M12 2c6-1 10 1 8 4-2 2-6 3-9 3M12 8c5 0 9 2 7 6M2 28C4 20 8 13 13 11M2 29c5 0 10-6 12-12" fill="none" stroke="#f2f2f2" stroke-width="2"/><path d="M30 13c-4-2-9-1-9 2s9 4 9 9-6 6-11 4" fill="none" stroke="#f2f2f2" stroke-width="2.500"/></svg>
      <span class="brand-a">SOLID</span><span class="brand-b">WORKS</span>
    </div>
    <nav class="menu"><span>文件(F)</span><span>编辑(E)</span><span>视图(V)</span><span>插入(I)</span><span>工具(T)</span><span>窗口(W)</span></nav>
    <svg class="pin"><use href="#q-pin"/></svg>
    <div class="quick">
      <span class="qi"><svg><use href="#q-home"/></svg></span>
      <span class="qi gap14"><svg><use href="#q-doc"/></svg></span><span class="qi"><i class="dd dim"></i></span>
      <span class="qi"><svg><use href="#q-open"/></svg></span><span class="qi"><i class="dd dim"></i></span>
      <span class="qi"><svg><use href="#q-save"/></svg></span><span class="qi"><i class="dd dim"></i></span>
      <span class="qi"><svg><use href="#q-print"/></svg></span><span class="qi"><i class="dd"></i></span>
      <span class="qi"><svg><use href="#q-undo"/></svg></span><span class="qi"><i class="dd dim"></i></span>
      <span class="qi"><svg><use href="#q-redo"/></svg></span><span class="qi"><i class="dd dim"></i></span>
      <span class="qi"><svg><use href="#q-cursor"/></svg></span><span class="qi"><i class="dd dim"></i></span>
      <span class="qi gap3"><svg><use href="#q-light"/></svg></span>
      <span class="qi gap16"><svg><use href="#q-list"/></svg></span>
      <span class="qi gap14"><svg><use href="#q-gear"/></svg></span><span class="qi"><i class="dd"></i></span>
      <span class="qi"><svg><use href="#q-user"/></svg></span>
    </div>
    <div class="doc-title">CS000 装配体 *</div>
  </header>

  <div class="toolrow macro">
    <div class="macro-box">
      <i class="grip-v"></i>
      <span class="mi mi-play"><svg><use href="#m-play"/></svg></span>
      <span class="mi"><svg><use href="#m-stop"/></svg></span>
      <span class="mi mi-pause"><svg><use href="#m-pause"/></svg></span>
      <span class="mi mi-run"><svg><use href="#m-run"/></svg></span>
      <span class="mi mi-edit"><svg><use href="#m-edit"/></svg></span>
    </div>
  </div>

  <div class="toolrow tools">
    <div class="tools-box">
      <i class="grip-v"></i>
      <div class="bigset">
        <span class="ti"><svg viewBox="0 0 32 32"><text x="1" y="15" font-family="Liberation Sans" font-size="13" fill="#606060">Abc</text><path d="M8 20l8 9 14-17-3-2-11 12-5-5z" fill="#595959"/></svg></span>
        <span class="ti"><svg><use href="#t-tape"/></svg></span>
        <span class="ti"><svg><use href="#t-scale"/></svg></span>
        <span class="ti"><svg><use href="#t-face"/></svg></span>
        <span class="ti"><svg><use href="#t-gauge"/></svg></span>
        <span class="ti"><svg><use href="#t-stat"/></svg></span>
        <span class="ti"><svg><use href="#t-boxc"/></svg></span>
        <span class="ti"><svg><use href="#t-box2"/></svg></span>
        <span class="ti"><svg><use href="#t-sum"/></svg></span>
        <span class="ti"><svg><use href="#t-sect"/></svg></span>
        <span class="ti"><svg><use href="#t-fold"/></svg></span>
        <span class="ti"><svg><use href="#t-inter"/></svg></span>
        <span class="ti"><svg viewBox="0 0 32 32"><path d="M2 2h12l4 4v21H2z" fill="#666"/><path d="M14 10h11l4 4v17H14z" fill="#5a5a5a" stroke="#686868"/><text x="18" y="27" font-family="Liberation Sans" font-size="12" fill="#3a3a3a">?</text></svg></span>
        <span class="ti"><svg><use href="#t-check"/></svg></span>
        <i class="dd tools-dd"></i>
        <span class="ti ti-tight"><svg><use href="#t-tablex"/></svg></span>
      </div>
      <i class="vbar"></i>
      <div class="bigset second">
        <span class="ti"><svg><use href="#t-hole"/></svg></span>
        <span class="ti"><svg><use href="#t-mesh"/></svg></span>
        <span class="ti"><svg><use href="#t-okc"/></svg></span>
        <span class="ti"><svg viewBox="0 0 32 32"><rect x="2" y="2" width="17" height="17" fill="#5f5f5f"/><rect x="8" y="13" width="20" height="16" fill="#666"/><text x="3" y="9" font-family="Liberation Sans" font-size="6" fill="#7a7a7a">Drive</text><text x="10" y="22" font-family="Liberation Sans" font-size="6" fill="#808080">Works</text></svg></span>
        <span class="ti"><svg><use href="#t-swirl"/></svg></span>
      </div>
      <i class="vbar"></i>
      <i class="grip-v grip-mid"></i>
      <div class="smallsets">
        <div class="sm-group"><span class="sm"><svg><use href="#n-bolt"/></svg></span><span class="sm"><svg><use href="#n-angle"/></svg></span></div>
        <div class="sm-group"><span class="sm"><svg><use href="#n-mon"/></svg></span><span class="sm"><svg><use href="#n-net"/></svg></span><span class="sm"><svg><use href="#n-globe"/></svg></span></div>
        <div class="sm-group"><span class="sm"><svg><use href="#n-gear"/></svg></span><span class="sm"><svg><use href="#n-gear2"/></svg></span><span class="sm"><svg><use href="#n-belt"/></svg></span><span class="sm"><svg><use href="#n-pin"/></svg></span><span class="sm"><svg><use href="#n-spring"/></svg></span><span class="sm"><svg><use href="#n-cross"/></svg></span></div>
        <div class="sm-group"><span class="sm"><svg><use href="#n-zoom"/></svg></span><span class="sm"><svg><use href="#n-bino"/></svg></span></div>
        <div class="sm-group"><span class="sm"><svg><use href="#n-xl"/></svg></span><span class="sm"><svg><use href="#n-print"/></svg></span><span class="sm"><svg viewBox="0 0 24 24"><rect x="2" y="3" width="18" height="20" fill="#d6ecdc"/><text x="5" y="21" font-family="Liberation Serif" font-size="15" fill="#111">A</text><path d="M20 1l1 4 3 1-3 2-1 4-2-4-3-1 3-2z" fill="#f0a020"/></svg></span></div>
        <div class="sm-group none"><span class="sm"><svg viewBox="0 0 24 24"><rect x="3" y="1" width="18" height="22" fill="#8fb4e8"/><path d="M3 3h3M3 7h3M3 11h3M3 15h3M3 19h3" stroke="#d9c040" stroke-width="2"/><text x="9" y="18" font-family="Liberation Sans" font-size="15" fill="#b01818">?</text></svg></span></div>
      </div>
    </div>
  </div>

  <div class="cmd">
    <div class="cg g1">
      <div class="cb"><svg><use href="#c1"/></svg><span>批量自动出图</span></div>
      <div class="cb"><svg><use href="#c2"/></svg><span>钣金转CAD</span></div>
      <div class="cb"><svg><use href="#c3"/></svg><span>批量改名</span></div>
      <div class="cb"><svg><use href="#c4"/></svg><span>批量加图号</span></div>
      <div class="cb"><svg><use href="#c5"/></svg><span>批量改属性</span></div>
      <div class="cb"><svg><use href="#c6"/></svg><span>属性卡</span></div>
    </div>
    <div class="cg g2">
      <div class="cb"><svg><use href="#c7"/></svg><span>BOM工具</span></div>
      <div class="cb ml2"><svg><use href="#c8"/></svg><span>导出部件清单</span></div>
      <div class="cb"><svg><use href="#c9"/></svg><span>三维格式转换</span></div>
      <div class="cb wide"><svg><use href="#c9"/></svg><span>图纸转PDFCAD</span></div>
      <div class="cb ml8"><svg><use href="#c10"/></svg><span>图层上色</span></div>
      <div class="cb"><svg><use href="#c11"/></svg><span>随机上色</span></div>
    </div>
    <div class="cg">
      <div class="cb"><svg><use href="#c12"/></svg><span>批量替换模板</span></div>
      <div class="cb"><svg><use href="#c13"/></svg><span>技术要求管理</span></div>
      <div class="cb"><svg><use href="#c14"/></svg><span>公差查询标注</span></div>
      <div class="cb"><svg><use href="#c15"/></svg><span>批量打印</span></div>
    </div>
    <div class="cg">
      <div class="cb"><svg><use href="#c16"/></svg><span>齿轮设计</span></div>
      <div class="cb"><svg><use href="#c17"/></svg><span>链轮设计</span></div>
      <div class="cb"><svg><use href="#c18"/></svg><span>弹簧设计</span></div>
    </div>
    <div class="cg">
      <div class="cb"><svg><use href="#c19"/></svg><span>国标件库</span></div>
      <div class="cb"><svg><use href="#c20"/></svg><span>组合夹具库</span></div>
      <div class="cb"><svg><use href="#c21"/></svg><span>机床夹具库</span></div>
      <div class="cb"><svg><use href="#c22"/></svg><span>模架库</span></div>
      <div class="cb"><svg><use href="#c23"/></svg><span>法兰库</span></div>
      <div class="cb"><svg><use href="#c24"/></svg><span>石化管件库</span></div>
      <div class="cb"><svg><use href="#c25"/></svg><span>焊件功能</span></div>
    </div>
    <div class="cg">
      <div class="cb"><svg><use href="#c26"/></svg><span>自定义功能</span></div>
      <div class="cb"><svg><use href="#c27"/></svg><span>上次使用的</span></div>
    </div>
    <div class="cg last">
      <div class="cb"><svg><use href="#c28"/></svg><span>更多功能</span></div>
      <div class="cb"><svg><use href="#c29"/></svg><span>激活</span></div>
      <div class="cb"><svg><use href="#c30"/></svg><span>设置</span></div>
      <div class="cb"><svg viewBox="0 0 16 16"><rect width="16" height="16" fill="#7f9ff0"/><text x="5" y="14" font-family="Liberation Serif" font-style="italic" font-weight="700" font-size="15" fill="#fff">i</text></svg><span>关于</span></div>
    </div>
  </div>

  <div class="tabrow">
    <div class="tabs">
      <span class="tab t55">特征</span><span class="tab t56">草图</span><span class="tab t56">钣金</span><span class="tab t56">焊件</span><span class="tab t96">网格建模</span><span class="tab t56">标注</span><span class="tab t56">评估</span><span class="tab t160">MBD Dimensions</span><span class="tab t176">SOLIDWORKS 插件</span><span class="tab t57">MBD</span><span class="tab t182">SOLIDWORKS CAM</span><span class="tab t220">SOLIDWORKS CAM TBM</span><span class="tab t96">大工程师</span><span class="tab active t73">KYTool</span>
    </div>
    <div class="viewtools">
      <svg class="vi"><use href="#v-zoom"/></svg>
      <svg class="vi"><use href="#v-zoomb"/></svg>
      <svg class="vi"><use href="#v-prev"/></svg>
      <svg class="vi"><use href="#v-sect"/></svg>
      <svg class="vi"><use href="#v-view"/></svg><i class="dd vdd"></i>
      <svg class="vi"><use href="#v-disp"/></svg><i class="dd vdd"></i>
      <svg class="vi"><use href="#v-eye"/></svg><i class="dd vdd"></i>
      <svg class="vi"><use href="#v-apar"/></svg>
      <svg class="vi"><use href="#v-scene"/></svg><i class="dd vdd"></i>
      <svg class="vi"><use href="#v-mon"/></svg><i class="dd vdd"></i>
    </div>
  </div>

  <div class="main">
    <aside class="strip">
      <i class="grip-h first"></i>
      <div class="si dr"><svg><use href="#s-ext"/></svg></div>
      <div class="si dr"><svg><use href="#s-frame"/></svg></div>
      <i class="sep"></i>
      <div class="si dr"><svg><use href="#s-cham"/></svg></div>
      <div class="si"><svg><use href="#s-rib"/></svg></div>
      <div class="si"><svg><use href="#s-box"/></svg></div>
      <div class="si"><svg><use href="#s-wedge"/></svg></div>
      <div class="si"><svg><use href="#s-cam"/></svg></div>
      <i class="sep"></i>
      <div class="si dr"><svg><use href="#s-grid"/></svg></div>
      <i class="sep"></i>
      <div class="si dr"><svg><use href="#s-ref"/></svg></div>
      <div class="si dr"><svg><use href="#s-curve"/></svg></div>
      <i class="sep sep8"></i>
      <div class="si"><svg><use href="#s-ruler"/></svg></div>
      <i class="grip-h"></i>
      <div class="si"><svg><use href="#s-u"/></svg></div>
      <div class="si"><svg><use href="#s-sheet"/></svg></div>
      <div class="si mt2"><svg><use href="#s-base"/></svg></div>
      <i class="sep flush"></i>
      <div class="si"><svg><use href="#s-fold"/></svg></div>
      <div class="si"><svg><use href="#s-square"/></svg></div>
      <div class="si"><svg><use href="#s-steps"/></svg></div>
      <div class="si"><svg><use href="#s-bend"/></svg></div>
      <div class="si"><svg><use href="#s-sheet"/></svg></div>
      <div class="si"><svg><use href="#s-pyr"/></svg></div>
      <div class="si dr"><svg><use href="#s-arc"/></svg></div>
      <div class="si short"><svg><use href="#s-mush"/></svg></div>
      <i class="sep flush sep5"></i>
      <div class="si"><svg><use href="#s-frame"/></svg></div>
      <div class="si"><svg><use href="#s-tray"/></svg></div>
      <div class="si tiny"><svg><use href="#s-bolts"/></svg></div>
      <i class="sep"></i>
      <div class="si"><svg><use href="#s-sheet"/></svg></div>
      <div class="si"><svg><use href="#s-sheet"/></svg></div>
      <div class="si"><svg><use href="#s-flat"/></svg></div>
      <div class="si mt2"><svg><use href="#s-nobend"/></svg></div>
      <i class="sep"></i>
      <div class="si"><svg><use href="#s-sheet"/></svg></div>
      <div class="si"><svg><use href="#s-tray"/></svg></div>
      <i class="sep flush"></i>
      <div class="tablebox">
        <i class="grip-h inbox"></i>
        <div class="si"><svg><use href="#tb1"/></svg></div>
        <div class="si"><svg><use href="#tb2"/></svg></div>
        <div class="si"><svg><use href="#tb3"/></svg></div>
        <div class="si"><svg><use href="#tb4"/></svg></div>
        <div class="si"><svg viewBox="0 0 32 32"><use href="#tb-grid"/><path d="M20 13l11 17H10z" fill="#727272" stroke="#555"/><text x="18" y="28" font-family="Liberation Sans" font-size="10" fill="#3e3e3e">1</text></svg></div>
        <div class="si"><svg><use href="#tb6"/></svg></div>
        <div class="si"><svg><use href="#tb7"/></svg></div>
        <div class="si"><svg><use href="#tb8"/></svg></div>
        <div class="si"><svg><use href="#tb9"/></svg></div>
        <div class="si"><svg><use href="#tb10"/></svg></div>
        <div class="si"><svg><use href="#tb11"/></svg></div>
      </div>
    </aside>

    <section class="panel">
      <div class="pm-sash"><i class="dot"></i></div>
      <div class="pm-tabs">
        <span class="pt"><svg><use href="#p-asm"/></svg></span>
        <span class="pt on"><svg><use href="#p-list"/></svg></span>
        <span class="pt"><svg><use href="#p-tree"/></svg></span>
        <span class="pt"><svg><use href="#p-cross"/></svg></span>
        <span class="pt"><svg><use href="#p-ball"/></svg></span>
        <span class="pt"><svg><use href="#p-cube"/></svg></span>
        <span class="pt"><svg><use href="#p-part"/></svg></span>
        <span class="pt"></span>
        <span class="pnav"><b>‹</b><b>›</b></span>
      </div>
      <div class="pm-title">
        <svg class="pm-icon"><use href="#p-save"/></svg>
        <h1>保存实体</h1>
        <span class="help">?</span>
      </div>
      <div class="pm-actions">
        <svg class="act" viewBox="0 0 26 18"><path d="M1 10l4-3 5 5L22 1l3 2-15 14z" fill="#45a03c" stroke="#7fd070" stroke-width=".6"/></svg>
        <svg class="act x" viewBox="0 0 20 18"><path d="M1 3l3-3 6 6 6-6 3 3-6 6 6 6-3 3-6-6-6 6-3-3 6-6z" fill="#e03020" stroke="#f08070" stroke-width=".6"/></svg>
      </div>

      <div class="sec first-sec">
        <div class="sec-head"><span>信息</span><svg><use href="#chev"/></svg></div>
        <div class="note">双击一实体文件名称或在图形区域中选取一实体标注以将实体指派到新文件。</div>
      </div>

      <div class="sec sec-parts">
        <div class="sec-head"><span>所产生零件(R)</span><svg><use href="#chev"/></svg></div>
        <div class="gridwrap">
          <table class="parts">
            <colgroup><col class="c-n"><col class="c-k"><col></colgroup>
            <thead><tr><th></th><th><svg class="floppy"><use href="#p-floppy"/></svg></th><th>标题</th></tr></thead>
            <tbody>
              <tr><td class="n">1</td><td class="k sel"><span class="box"><svg><use href="#tick"/></svg></span></td><td class="l"><div>M6×12-<span class="cn">内六角圆柱头螺钉</span>-4-solid1.SLDPRT</div></td></tr>
              <tr><td class="n">2</td><td class="k sel"><span class="box"><svg><use href="#tick"/></svg></span></td><td class="l"><div>M6×12-<span class="cn">内六角圆柱头螺钉</span>-1-solid1.SLDPRT</div></td></tr>
              <tr><td class="n">3</td><td class="k sel"><span class="box"><svg><use href="#tick"/></svg></span></td><td class="l"><div>M6×12-<span class="cn">内六角圆柱头螺钉</span>-2-solid1.SLDPRT</div></td></tr>
              <tr><td class="n">4</td><td class="k sel"><span class="box"><svg><use href="#tick"/></svg></span></td><td class="m">CS001 <span class="cn">测试零件</span>1-1-solid1.SLDPRT</td></tr>
              <tr><td class="n">5</td><td class="k sel"><span class="box"><svg><use href="#tick"/></svg></span></td><td class="m">CS002 <span class="cn">测试零件</span>2-1-solid1.SLDPRT</td></tr>
              <tr><td class="n">6</td><td class="k"><span class="box"></span></td><td class="m">&lt;<span class="cn">无</span>&gt;</td></tr>
            </tbody>
          </table>
        </div>
        <button class="btn auto">自动分配标题(T)</button>
        <label class="chk r1"><i class="cbx"></i><span>消耗切除实体<span class="key">(<u>U</u>)</span></span></label>
        <label class="chk r2"><i class="cbx"></i><span>延伸视象属性<span class="key">(<u>P</u>)</span></span></label>
        <div class="sub">原点位置<span class="key">(L):</span></div>
        <div class="inp white"></div>
        <label class="chk r3"><i class="cbx"></i><span>将自定义属性复制到新零件<span class="key">(<u>O</u>)</span></span></label>
      </div>

      <div class="sec sec-asm">
        <div class="sec-head"><span>生成装配体(A)</span><svg><use href="#chev"/></svg></div>
        <div class="inp grey"></div>
        <button class="btn browse">浏览(W)...</button>
        <label class="chk off"><i class="cbx"></i>从相似实体或切割清单派生所产生的零件</label>
      </div>

      <div class="sec sec-tpl">
        <div class="sec-head"><span>模板设定(S)</span><svg><use href="#chev"/></svg></div>
        <label class="chk"><i class="cbx"><svg><use href="#tick"/></svg></i><span>覆盖默认模板设定<span class="key">(<u>O</u>)</span></span></label>
        <div class="cut-label"><span>零件模板:</span></div>
        <div class="pathrow"><div class="path">C:\ProgramData\SOLIDWORKS\SOLIDWORKS 2021\templates</div><button class="btn dots">...</button></div>
      </div>

      <div class="pm-foot"></div>
      <div class="pm-handle"><i class="dot"></i></div>
    </section>

    <main class="viewport">
      <div class="tree"><i class="tree-arrow"></i><svg class="tree-icon"><use href="#p-asm"/></svg><span>CS000 装配...</span></div>

      <svg class="model" viewBox="458 294 2471 1742">
        <!-- base plate -->
        <path d="M917 1121V1177L1311 1711Q1340 1745 1386 1716L2310 1211Q2333 1190 2333 1139V1125L1500 1300Z" fill="#530053"/>
        <path d="M917 1121V1177L1311 1711Q1322 1726 1340 1730V1660L1311 1649 930 1158Z" fill="#6e006e"/>
        <path d="M1311 1649V1711M1382 1667V1716M2310 1152V1211" stroke="#2a002a" stroke-width="1"/>
        <path d="M953 1080L1861 593Q1896 571 1938 601L2310 1085Q2350 1125 2319 1152L1382 1667Q1353 1686 1311 1649L930 1158Q893 1120 953 1080Z" fill="#ff19ff" stroke="#301030" stroke-width="1"/>
        <!-- raised plate -->
        <path d="M1059 1115L1065 1158 1340 1535Q1362 1562 1386 1556L2174 1137Q2194 1125 2194 1079L1415 1497 1386 1501 1345 1482Z" fill="#530053" stroke="#200020"/>
        <path d="M1061 1083L1836 654Q1871 634 1890 648L2193 1029Q2200 1050 2193 1079L1415 1497Q1386 1512 1345 1482L1059 1115Q1052 1097 1061 1083Z" fill="#ff19ff" stroke="#1d3a2c" stroke-width="1"/>
        <!-- boss -->
        <path d="M1430 915 1427 1109A202 135 0 0 0 1831 1109L1834 915Z" fill="url(#bodyGrad)"/>
        <ellipse cx="1632" cy="916" rx="202" ry="170" fill="url(#chamfer)" stroke="#1c6a30" stroke-width=".8"/>
        <ellipse cx="1633" cy="910" rx="192" ry="160" fill="#ff19ff" stroke="#24402c" stroke-width=".8"/>
        <ellipse cx="1633" cy="910" rx="161" ry="134" fill="#980098" stroke="#111" stroke-width="1"/>
        <ellipse cx="1633" cy="917" rx="151" ry="125" fill="#530050" stroke="#111" stroke-width="1"/>
        <path d="M1535 1022Q1625 970 1725 1025V1050H1535Z" fill="#ff19ff" clip-path="url(#holeClip)"/>
        <g stroke="#2f9a3a" stroke-width="13"><path d="M1553 801 1558 796M1572 793 1578 789M1600 785 1612 783M1623 782H1643M1655 784 1668 785M1686 791 1695 795M1709 800 1713 803"/></g>
        <!-- screws -->
        <g transform="translate(1812 738)"><ellipse cy="38" rx="59" ry="42" fill="#3f003f"/><path d="M-50 0-48 38A48 37 0 0 0 48 38L50 0Z" fill="url(#screwGrad)"/><ellipse rx="50" ry="41" fill="#ff19ff" stroke="#1a3026"/><path d="M-11-21 14-22 30-3 17 21-8 21-26 2Z" fill="#ff19ff" stroke="#222"/><path d="M-11-21 14-22 30-3 4-6-26 2Z" fill="#530050"/></g>
        <g transform="translate(2035 1022)"><ellipse cy="38" rx="60" ry="44" fill="#5a005a"/><path d="M-50 0-48 38A48 37 0 0 0 48 38L50 0Z" fill="url(#greyScrew)"/><ellipse rx="50" ry="41" fill="#babec8" stroke="#555"/><path d="M-11-21 14-22 30-3 17 21-8 21-26 2Z" fill="#babec8" stroke="#222"/><path d="M-11-21 14-22 30-3 4-6-26 2Z" fill="#3e4046"/></g>
        <g transform="translate(1223 1057)"><ellipse cy="36" rx="60" ry="42" fill="#3f003f"/><path d="M-50 0-48 36A48 36 0 0 0 48 36L50 0Z" fill="url(#screwGrad)"/><ellipse rx="50" ry="41" fill="#ff19ff" stroke="#1a3026"/><path d="M-11-21 14-22 30-3 17 21-8 21-26 2Z" fill="#ff19ff" stroke="#222"/><path d="M-11-21 14-22 30-3 4-6-26 2Z" fill="#530050"/></g>
        <g transform="translate(1443 1343)"><ellipse cy="36" rx="61" ry="42" fill="#3f003f"/><path d="M-50 0-48 36A48 36 0 0 0 48 36L50 0Z" fill="url(#screwGrad)"/><ellipse rx="50" ry="41" fill="#ff19ff" stroke="#1a3026"/><path d="M-11-21 14-22 30-3 17 21-8 21-26 2Z" fill="#ff19ff" stroke="#222"/><path d="M-11-21 14-22 30-3 4-6-26 2Z" fill="#530050"/></g>
        <!-- origin -->
        <path d="M1600 1095 1625 1129M1625 1129 1644 1117M1620 1126l10 8M1630 1126l-10 8" stroke="#0a0ae0" stroke-width="2" fill="none"/>
        <path d="M1600 1095l8 8-6 3zM1644 1117l-4 8-4-5z" fill="#0a0ae0"/>
        <!-- leaders -->
        <g class="leaders-shade" fill="none"><path d="M1785 637 1812 777M2060 655 2049 872M1258 1079 2033 1063M2013 1080 1624 1155M1223 1099 1243 1525M1443 1383 1755 1525"/></g>
        <g class="leaders" fill="none"><path d="M1785 637 1812 777M2060 655 2049 872M1258 1079 2033 1063M2013 1080 1624 1155M1223 1099 1243 1525M1443 1383 1755 1525"/></g>
        <!-- triad -->
        <path d="M520 1958 495 1927 492 1929 518 1960Z" fill="#1e6a1e"/><path d="M494 1926l10 4 6 10-10 6z" fill="#1a6a1a"/>
        <rect x="516" y="1942" width="7" height="18" fill="#0000b0"/><circle cx="520" cy="1942" r="6" fill="#3050d0"/><circle cx="521" cy="1940" r="2.500" fill="#a0b8f0"/>
        <path d="M522 1958 555 1938 545 1949 524 1962Z" fill="#f8b0b0"/><path d="M541 1940l14-2-6 12z" fill="#d02020"/>
        <text class="axis ay" x="486" y="1922">Y</text><text class="axis az" x="516" y="1931">Z</text><text class="axis ax" x="560" y="1935">X</text>
      </svg>
      <svg class="anchors" viewBox="458 294 2471 1742">
        <g fill="#fff" stroke="#222" stroke-width="1.200"><circle cx="1785" cy="637" r="3.500"/><circle cx="1812" cy="777" r="3.500"/><circle cx="2060" cy="655" r="3.500"/><circle cx="2049" cy="872" r="3.500"/><circle cx="1258" cy="1079" r="3.500"/><circle cx="2033" cy="1063" r="3.500"/><circle cx="2013" cy="1080" r="3.500"/><circle cx="1624" cy="1155" r="3.500"/><circle cx="1243" cy="1525" r="3.500"/><circle cx="1443" cy="1383" r="3.500"/><circle cx="1755" cy="1525" r="3.500"/></g>
      </svg>

      <div class="callout c1"><b>实体&nbsp;&nbsp;1:</b><span>M6×12-内六角圆柱头螺钉-4-solid1.SLDPRT</span><i class="pinbox"><svg><use href="#c-pin"/></svg></i></div>
      <div class="callout c4"><b>实体&nbsp;&nbsp;4:</b><span>CS001 测试零件1-1-solid1.SLDPRT</span><i class="pinbox"><svg><use href="#c-pin"/></svg></i></div>
      <div class="callout c5"><b>实体&nbsp;&nbsp;5:</b><span>CS002 测试零件2-1-solid1.SLDPRT</span><i class="pinbox"><svg><use href="#c-pin"/></svg></i></div>
      <div class="callout c6"><b>实体&nbsp;&nbsp;6:</b><span>&lt;无&gt;</span><i class="pinbox light"><svg><use href="#q-pin"/></svg></i></div>
      <div class="callout c2"><b>实体&nbsp;&nbsp;2:</b><span>M6×12-内六角圆柱头螺钉-1-solid1.SLDPRT</span><i class="pinbox light"><svg><use href="#q-pin"/></svg></i></div>
      <div class="callout c3"><b>实体&nbsp;&nbsp;3:</b><span>M6×12-内六角圆柱头螺钉-2-solid1.SLDPRT</span><i class="pinbox"><svg><use href="#c-pin"/></svg></i></div>
    </main>
  </div>

  <footer class="bottom">
    <div class="navbtns"><i class="nb"></i><i class="nb"></i><i class="nb"></i><i class="nb"></i></div>
    <span class="btab on">模型</span><span class="btab b3d">3D 视图</span><span class="btab bmo">运动算例 1</span>
  </footer>

  <svg class="annot" viewBox="0 0 2929 2049">
    <rect x="81" y="595" width="74" height="244" fill="none" stroke="#ec1420" stroke-width="4" stroke-dasharray="13 8"/>
    <polygon points="676,472 678,476 184,769 186,773 153,776 174,752 177,761" fill="#ec1212"/>
  </svg>
</div>
</body>
</html>
```

FILE: styles.css
```css
* { box-sizing: border-box; }
html, body { margin: 0; padding: 0; background: #4a4a4a; }
body { width: 2929px; height: 2049px; overflow: hidden; font-family: "Open Sans", "Noto Sans CJK SC", sans-serif; font-size: 17px; color: #d9d9d9; }
i { display: block; font-style: normal; }
svg { display: block; }
.sprite { position: absolute; width: 0; height: 0; overflow: hidden; }
.app { position: relative; display: flex; flex-direction: column; width: 2929px; height: 2049px; overflow: hidden; background: #4a4a4a; }

/* title bar */
.titlebar { display: flex; align-items: center; height: 55px; flex: none; border-top: 1px solid #a8a8a8; border-bottom: 1px solid #c4c4c4; }
.brand { display: flex; align-items: center; width: 217px; flex: none; padding-left: 8px; color: #f2f2f2; font-family: "Liberation Sans", sans-serif; font-size: 20px; font-style: italic; }
.ds-logo { width: 34px; height: 32px; margin-right: 4px; }
.brand-a { font-weight: 700; letter-spacing: -.3px; }
.brand-b { letter-spacing: -2.6px; }
.menu { display: flex; gap: 15.500px; width: 418px; flex: none; font-size: 17px; line-height: 22px; color: #e2e2e2; }
.pin { width: 22px; height: 24px; margin: 0 8px 0 2px; flex: none; }
.quick { display: flex; align-items: center; height: 53px; flex: none; border-left: 1px solid #8a8a8a; padding-left: 38px; }
.qi { display: flex; align-items: center; justify-content: center; width: 31px; height: 32px; }
.qi svg { width: 32px; height: 32px; flex: none; }
.gap3 { margin-left: 3px; }
.gap14 { margin-left: 14px; }
.gap16 { margin-left: 16px; }
.dd { width: 0; height: 0; border-left: 5px solid transparent; border-right: 5px solid transparent; border-top: 6px solid #f0f0f0; }
.dd.dim { border-top-color: #7a7a7a; }
.doc-title { margin-left: auto; padding-right: 579px; font-size: 16.500px; color: #cfcfcf; line-height: 22px; }

/* toolbars */
.toolrow { flex: none; border-bottom: 1px solid #a8a8a8; }
.macro { height: 44px; }
.tools { height: 45px; }
.macro-box { display: flex; align-items: center; width: 217px; height: 43px; border-right: 1px solid #808080; }
.tools-box { display: flex; align-items: center; width: 1549px; height: 44px; border-right: 1px solid #808080; }
.grip-v { width: 2px; height: 36px; margin-left: 3px; flex: none; border-left: 2px dotted #e4e4e4; }
.mi { display: flex; justify-content: center; width: 30px; margin-left: 10px; flex: none; }
.mi svg { width: 30px; height: 30px; }
.mi-play { margin-left: 12px; }
.mi-pause { margin-left: 8px; }
.mi-run { margin-left: 8px; }
.mi-edit { margin-left: 11px; }
.bigset { display: flex; align-items: center; flex: none; padding-left: 8px; }
.ti { display: flex; justify-content: center; width: 39px; flex: none; }
.ti svg { width: 30px; height: 30px; }
.ti-tight { width: 34px; margin-left: 5px; }
.tools-dd { margin: 0 0 0 11px; flex: none; }
.vbar { width: 1px; height: 36px; margin-left: 7px; background: #8a8a8a; flex: none; }
.second { padding-left: 8px; }
.second .ti { width: 39.500px; }
.grip-mid { margin-left: 2px; }
.smallsets { display: flex; padding-left: 19px; }
.sm-group { position: relative; display: flex; margin-right: 7.500px; }
.sm-group::after { content: ""; position: absolute; top: -9px; right: 7px; width: 1px; height: 14px; background: #bcbcbc; }
.sm-group.none::after { display: none; }
.sm { width: 23px; display: flex; justify-content: center; }
.sm svg { width: 19px; height: 22px; }

/* command manager */
.cmd { display: flex; height: 118px; flex: none; border-bottom: 1px solid #8e8e8e; padding-top: 1px; }
.cg { display: flex; height: 114px; padding: 0 1px; border-right: 1px solid #7c7c7c; flex: none; }
.cg.g1 { padding-left: 6px; }
.cg.g2 { padding-left: 3px; }
.cg.last { border-right: 0; }
.cb { display: flex; flex-direction: column; align-items: center; width: 44px; flex: none; text-align: center; padding-top: 13px; }
.cb svg { width: 16px; height: 16px; flex: none; }
.cb span { margin-top: 8px; width: 100%; font-size: 17px; line-height: 23px; color: #d8d8d8; }
.cb.ml2 { margin-left: 2px; }
.cb.ml8 { margin-left: 8px; }
.cb.wide { width: 60px; margin-left: 6px; }

/* tabs */
.tabrow { display: flex; height: 32px; flex: none; background: #c3c8d4; position: relative; z-index: 2; }
.tabs { display: flex; flex: none; height: 33px; border-bottom: 1px solid #8a8a8a; }
.tab { display: flex; align-items: center; justify-content: center; height: 32px; background: #333; border-right: 1px solid #8a8a8a; font-size: 17.500px; color: #dedede; white-space: nowrap; overflow: hidden; }
.tab.active { background: #4a4a4a; border-right: 2px solid #8a8a8a; }
.t55 { width: 55px; } .t56 { width: 56px; } .t57 { width: 57px; } .t73 { width: 73px; } .t96 { width: 96px; } .t160 { width: 160px; } .t176 { width: 176px; } .t182 { width: 182px; } .t220 { width: 220px; }
.viewtools { display: flex; align-items: center; margin-left: 351px; height: 42px; flex: none; }
.vi { width: 26px; height: 28px; margin-right: 12px; flex: none; }
.vdd { margin: 0 14px 0 -7px; border-top-color: #8a8f98; border-left-width: 4px; border-right-width: 4px; flex: none; }

/* main */
.main { display: flex; flex: 1; min-height: 0; }
.strip { width: 68px; flex: none; }
.grip-h { height: 2px; margin: 2px 3px 9px; border-top: 2px dotted #bdbdbd; }
.grip-h.first { margin-top: 2px; }
.si { position: relative; display: flex; align-items: center; height: 38px; padding-left: 6px; }
.si svg { width: 32px; height: 32px; }
.si.dr::after { content: ""; position: absolute; left: 52px; top: 17px; border-left: 5px solid transparent; border-right: 5px solid transparent; border-top: 5px solid #6e6e6e; }
.si.mt2 { margin-top: 2px; }
.si.short { height: 32px; margin-top: 7px; }
.si.tiny svg { width: 24px; height: 24px; margin-left: 4px; }
.sep { height: 1px; margin: 1px 3px 6px; background: #9a9a9a; }
.sep.sep8 { margin-bottom: 8px; }
.sep.flush { margin-top: 0; }
.sep.sep5 { margin-bottom: 5px; }
.tablebox { width: 46px; height: 440px; margin-top: 14px; border-top: 1px solid #8a8a8a; border-right: 1px solid #8a8a8a; border-bottom: 1px solid #8a8a8a; position: relative; }
.tablebox .si { padding-left: 6px; }
.tablebox .si svg { width: 32px; height: 32px; }
.grip-h.inbox { margin: 4px 3px 8px; }

/* property manager */
.panel { position: relative; display: flex; flex-direction: column; width: 390px; flex: none; }
.pm-sash { position: relative; height: 30px; flex: none; border-bottom: 1px solid #7e7e7e; background: linear-gradient(#4a4a4a 3px, #7e7e7e 3px, #7e7e7e 4px, #4a4a4a 4px); }
.dot { width: 12px; height: 12px; border-radius: 50%; background: radial-gradient(circle at 35% 30%, #f2f2f2, #8e8e8e); }
.pm-sash .dot { position: absolute; left: 187px; top: 12px; }
.pm-tabs { position: relative; display: flex; height: 37px; margin-top: 5px; flex: none; overflow: hidden; width: 387px; }
.pt { display: flex; align-items: center; justify-content: center; width: 52px; height: 37px; flex: none; background: #383838; border-right: 1px solid #808080; }
.pt.on { background: #4a4a4a; }
.pt svg { width: 30px; height: 29px; }
.pnav { position: absolute; right: 0; bottom: 0; display: flex; gap: 1px; height: 23px; }
.pnav b { display: flex; align-items: center; justify-content: center; width: 23px; background: #dedede; color: #333; font-weight: 400; font-size: 20px; line-height: 20px; }
.pm-title { display: flex; align-items: center; height: 46px; flex: none; padding: 1px 0 0 13px; }
.pm-icon { width: 26px; height: 26px; flex: none; }
.pm-title h1 { margin: 0 0 0 7px; font-size: 20px; line-height: 26px; font-weight: 700; color: #e2e2e2; }
.help { display: flex; align-items: center; justify-content: center; width: 26px; height: 26px; margin-left: auto; margin-right: 15px; border-radius: 50%; background: radial-gradient(circle at 40% 30%, #fff, #c9d4dc); color: #2a7ab8; font: 700 20px "Liberation Sans", sans-serif; }
.pm-actions { display: flex; align-items: center; height: 32px; flex: none; padding-left: 7px; }
.act { width: 26px; height: 18px; }
.act.x { width: 20px; margin-left: 16px; }
.sec { margin: 0 8px 0 4px; border-top: 1px solid #a0a0a0; flex: none; }
.first-sec { margin-top: 11px; padding-bottom: 4px; }
.sec-head { display: flex; align-items: center; justify-content: space-between; height: 35px; padding: 0 5px; font-weight: 700; font-size: 17px; line-height: 22px; color: #e4e4e4; }
.sec-head svg { width: 18px; height: 12px; }
.note { height: 51px; padding: 0 4px; background: #ffff80; color: #222; font-size: 17px; line-height: 21px; font-family: "Noto Sans CJK SC", sans-serif; overflow: hidden; }

.gridwrap { width: 354px; height: 314px; margin-left: 4px; background: #a9a9a9; border: 2px solid #dcdcdc; }
.parts { table-layout: fixed; width: 350px; border-collapse: collapse; background: #fff; color: #333; }
.c-n { width: 29px; } .c-k { width: 36px; }
.parts th { height: 38px; background: #efefef; font-weight: 400; font-size: 17px; color: #222; padding: 0; border-left: 1px solid #222; border-bottom: 1px solid #666; }
.parts th:first-child { border-left: 0; }
.parts td { height: 36px; padding: 0; border-bottom: 1px solid #777; font-family: "Liberation Sans", "Noto Sans CJK SC", sans-serif; font-size: 15px; white-space: nowrap; overflow: hidden; }
.parts td .cn { font-family: "Noto Sans CJK SC", sans-serif; font-size: 17px; line-height: 20px; letter-spacing: 0; }
.parts td.n { background: #fafafa; text-align: right; padding-right: 6px; font-family: "Open Sans", sans-serif; font-size: 16px; }
.parts td.k { border-left: 1px solid #222; border-right: 1px solid #222; }
.parts td.k.sel { background: #0a78d2; }
.parts td.l { padding-left: 4px; }
.parts td.l div { width: 277px; overflow: hidden; letter-spacing: .65px; }
.parts td.m { text-align: center; }
.box { display: block; width: 26px; height: 26px; margin: 0 auto; background: linear-gradient(#f6f6f6, #dcdcdc); border: 2px solid #3c4a52; box-shadow: 0 0 0 1px #a0b0b8; }
.box svg { width: 22px; height: 22px; }
.floppy { width: 19px; height: 17px; margin: 0 auto 7px; }
.btn { display: block; padding: 0; margin: 0; background: #dcdcdc; border: 1px solid #9a9a9a; color: #222; font-family: inherit; font-size: 17px; line-height: 22px; }
.btn.auto { width: 165px; height: 34px; margin: 10px 0 0 102px; padding-bottom: 6px; }
.chk { display: flex; align-items: center; height: 19px; margin-left: 4px; font-size: 17px; line-height: 19px; color: #d9d9d9; gap: 3px; }
.key { font-size: 16px; letter-spacing: -.3px; }
.key u { text-underline-offset: 2px; }
.cbx { width: 19px; height: 19px; flex: none; background: #fff; }
.cbx svg { width: 19px; height: 19px; }
.chk.r1 { margin-top: 11px; }
.chk.r2 { margin-top: 13px; }
.chk.r3 { margin-top: 10px; }
.chk.off { margin-top: 10px; color: #848484; }
.sub { margin: 13px 0 0 54px; height: 22px; line-height: 22px; }
.inp { margin-left: 54px; border: 1px solid #8a90a8; }
.inp.white { width: 304px; height: 38px; margin-top: 9px; background: #fff; }
.inp.grey { width: 322px; height: 36px; background: #bababa; border-color: #8c8c8c; }
.sec-parts { padding-bottom: 14px; }
.sec-asm { padding-bottom: 15px; }
.btn.browse { width: 90px; height: 34px; margin: 7px 0 0 120px; }
.sec-tpl .sec-head { height: 36px; }
.cut-label { height: 7px; margin: 15px 0 0 28px; overflow: hidden; }
.cut-label span { display: block; height: 22px; line-height: 22px; margin-top: -3px; }
.pathrow { display: flex; gap: 6px; align-items: center; margin-left: 29px; }
.path { width: 286px; height: 36px; padding: 2px 1px 0 3px; background: #bababa; border: 1px solid #8c8c8c; color: #222; font-family: "Open Sans", sans-serif; font-size: 15.500px; line-height: 22px; white-space: nowrap; overflow: hidden; }
.btn.dots { width: 36px; height: 34px; }
.pm-foot { margin-top: auto; height: 3px; border-top: 2px solid #7e7e7e; }
.pm-handle { position: absolute; left: 390px; top: 825px; z-index: 3; display: flex; align-items: center; justify-content: center; width: 13px; height: 58px; background: #4a4a4a; border: 1px solid #7e7e7e; border-left: 0; border-radius: 0 2px 2px 0; }
.pm-handle .dot { width: 11px; height: 11px; }

/* viewport */
.viewport { position: relative; flex: 1; min-width: 0; background: #c3c8d4; overflow: hidden; }
.tree { position: relative; z-index: 1; display: flex; align-items: center; height: 26px; margin-top: 11px; padding-left: 10px; color: #111; font-size: 18px; line-height: 22px; }
.tree-arrow { width: 0; height: 0; border-top: 5px solid transparent; border-bottom: 5px solid transparent; border-left: 6px solid #222; margin-right: 20px; }
.tree-icon { width: 26px; height: 26px; margin-right: 5px; }
.model, .anchors { position: absolute; left: 0; top: 0; width: 2471px; height: 1742px; }
.anchors { z-index: 3; }
.leaders { stroke: #fff; stroke-width: 2.200px; }
.leaders-shade { stroke: #222; stroke-width: 3.200px; opacity: .65; }
.axis { font: 16px "Liberation Sans", sans-serif; }
.ay { fill: #2a9a3a; } .az { fill: #3d4ee8; } .ax { fill: #e25050; }
.callout { position: absolute; z-index: 2; display: flex; height: 38px; background: #fff; border: 2px solid #111; box-shadow: 0 0 0 2px #fff; font-family: "Liberation Sans", "Noto Sans CJK SC", sans-serif; font-size: 16px; line-height: 36px; color: #222; white-space: nowrap; }
.callout b { display: block; width: 65px; flex: none; padding-left: 6px; font-weight: 400; background: #f5f5f5; border-right: 2px solid #111; }
.callout span { padding-left: 5px; }
.pinbox { position: absolute; right: -2px; top: -33px; width: 33px; height: 30px; border: 6px solid #4a4a4a; }
.pinbox svg { width: 21px; height: 18px; }
.pinbox.light svg { opacity: .8; }
.c1 { left: 920px; top: 323px; width: 407px; }
.c4 { left: 1432px; top: 323px; width: 341px; }
.c5 { left: 1553px; top: 767px; width: 341px; }
.c6 { left: 663px; top: 767px; width: 137px; }
.c2 { left: 785px; top: 1211px; width: 407px; }
.c3 { left: 1297px; top: 1211px; width: 407px; }

/* bottom */
.bottom { display: flex; height: 13px; flex: none; padding-left: 68px; overflow: hidden; border-top: 1px solid #8a8a8a; }
.navbtns { display: flex; gap: 2px; width: 97px; flex: none; padding: 1px 2px 0; border-top: 1px solid #111; background: #8fa0ac; }
.nb { flex: 1; background: #a9aeba; }
.btab { display: flex; justify-content: center; align-items: flex-start; background: #333; border-left: 1px solid #8a8a8a; font-size: 19px; line-height: 24px; color: #e4e4e4; flex: none; }
.btab.on { width: 71px; background: #4a4a4a; }
.b3d { width: 90px; }
.bmo { width: 127px; border-right: 1px solid #8a8a8a; }

/* annotation */
.annot { position: absolute; left: 0; top: 0; width: 2929px; height: 2049px; z-index: 5; pointer-events: none; filter: drop-shadow(2px 2px 1px rgba(60, 0, 0, .45)); }
```
